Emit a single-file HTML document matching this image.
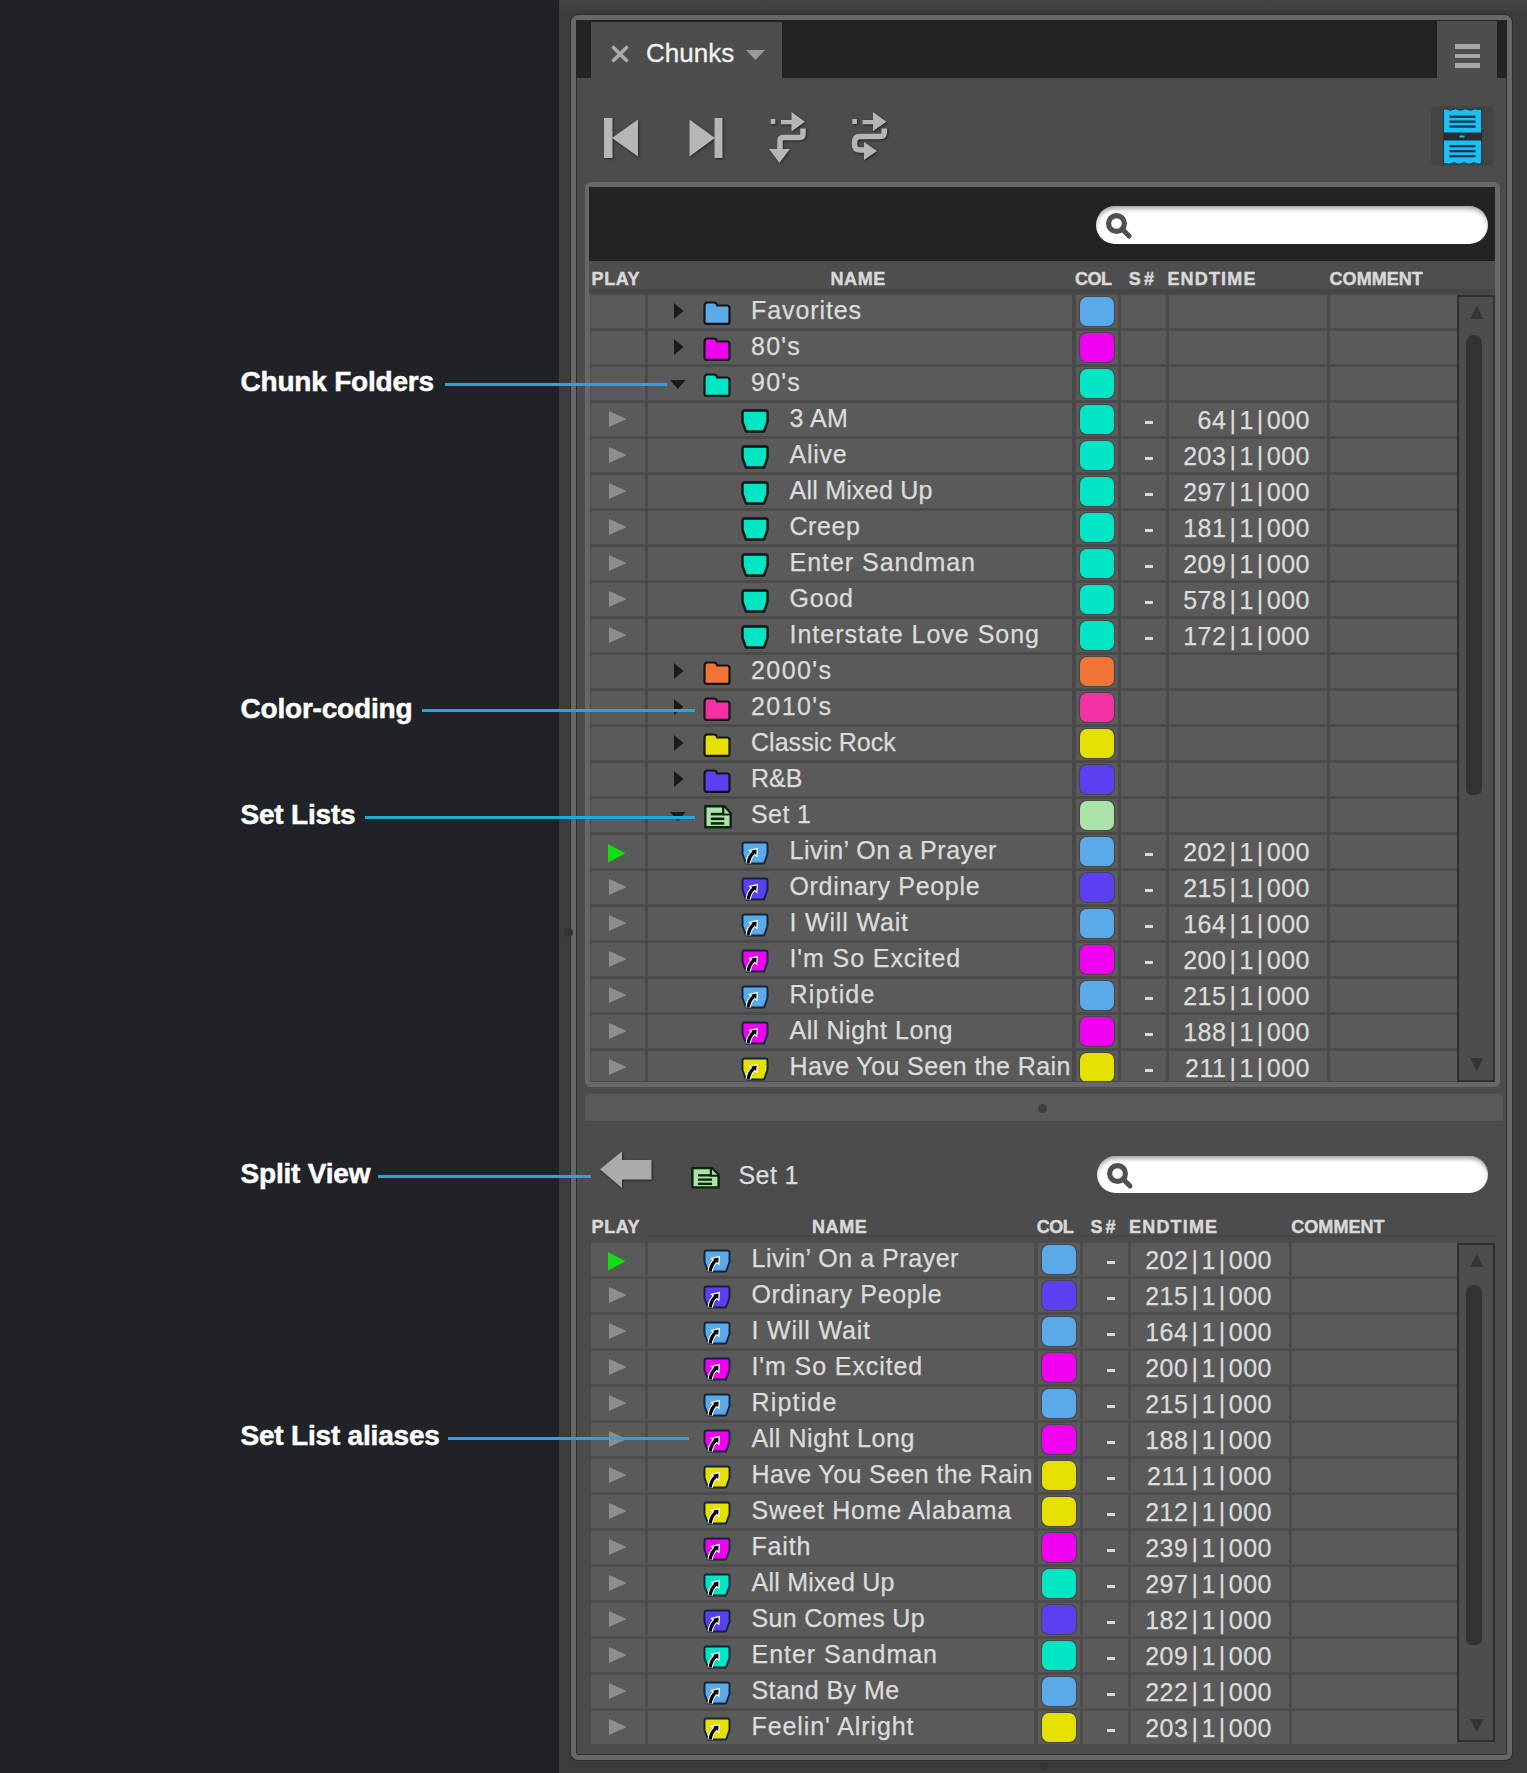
<!DOCTYPE html><html><head><meta charset="utf-8"><style>html,body{margin:0;padding:0;}body{width:1527px;height:1773px;position:relative;overflow:hidden;background:#3c3c3c;font-family:"Liberation Sans", sans-serif;}</style></head><body>
<div style="position:absolute;left:0px;top:0px;width:559px;height:1773px;background:#1f2328;"></div>
<div style="position:absolute;left:559px;top:0px;width:968px;height:14px;background:linear-gradient(#424242 0%, #404040 65%, #383838 100%);"></div>
<div style="position:absolute;left:571px;top:14.5px;width:940.5px;height:1745.5px;box-sizing:border-box;border:5px solid #676767;border-radius:7px;background:#4c4c4c;box-shadow:0 0 0 1px #2e2e2e, inset 0 0 0 1px #2e2e2e"></div>
<div style="position:absolute;left:576px;top:20px;width:931px;height:58px;background:#232323;"></div>
<div style="position:absolute;left:591px;top:22px;width:191px;height:57px;background:#4d4d4d;"></div>
<svg style="position:absolute;left:611px;top:45px;overflow:visible;" width="18" height="18" viewBox="0 0 18 18" preserveAspectRatio="none"><path d="M2.5 2.5 L15.5 15.5 M15.5 2.5 L2.5 15.5" stroke="#aaaaaa" stroke-width="3.6" stroke-linecap="round"/></svg>
<div style="position:absolute;left:646px;top:40px;font-size:26px;line-height:26px;color:#f2f2f2;font-weight:normal;letter-spacing:0px;white-space:nowrap;-webkit-text-stroke:0.3px #f2f2f2">Chunks</div>
<svg style="position:absolute;left:746px;top:49.5px;overflow:visible;" width="19" height="10" viewBox="0 0 19 10" preserveAspectRatio="none"><path d="M0 0 L19 0 L9.5 10 Z" fill="#999999"/></svg>
<div style="position:absolute;left:1437px;top:21px;width:60px;height:58px;background:#4d4d4d;"></div>
<div style="position:absolute;left:1455px;top:44px;width:25px;height:4.6px;background:#a8a8a8;"></div>
<div style="position:absolute;left:1455px;top:53.5px;width:25px;height:4.6px;background:#a8a8a8;"></div>
<div style="position:absolute;left:1455px;top:63.3px;width:25px;height:4.6px;background:#a8a8a8;"></div>
<svg style="position:absolute;left:603px;top:117px;overflow:visible;filter:drop-shadow(1px 1px 1px rgba(0,0,0,0.55))" width="36" height="42" viewBox="0 0 36 42" preserveAspectRatio="none"><rect x="1" y="1" width="8.5" height="40" fill="#b6b6b6"/><path d="M9 21 L35 2.5 L35 39.5 Z" fill="#b6b6b6"/></svg>
<svg style="position:absolute;left:689px;top:117px;overflow:visible;filter:drop-shadow(1px 1px 1px rgba(0,0,0,0.55))" width="34" height="42" viewBox="0 0 34 42" preserveAspectRatio="none"><rect x="25.5" y="1" width="8" height="40" fill="#b6b6b6"/><path d="M0.5 2.5 L26 21 L0.5 39.5 Z" fill="#b6b6b6"/></svg>
<svg style="position:absolute;left:768px;top:110px;overflow:visible;filter:drop-shadow(1px 1px 1px rgba(0,0,0,0.55))" width="42" height="56" viewBox="0 0 42 56" preserveAspectRatio="none"><rect x="2.7" y="9" width="4.6" height="5" fill="#b6b6b6"/><rect x="13" y="10" width="12" height="4.3" fill="#b6b6b6"/><path d="M23.5 2 L37 11.8 L23.5 21.5 Z" fill="#b6b6b6"/><path d="M35 18.5 L35 24 Q35 27.5 31.5 27.5 L15.5 27.5 Q12 27.5 12 31 L12 40" fill="none" stroke="#b6b6b6" stroke-width="5.5"/><path d="M1 39 L22 39 L11.5 53 Z" fill="#b6b6b6"/></svg>
<svg style="position:absolute;left:850px;top:110px;overflow:visible;filter:drop-shadow(1px 1px 1px rgba(0,0,0,0.55))" width="42" height="56" viewBox="0 0 42 56" preserveAspectRatio="none"><rect x="2.3" y="9" width="4.6" height="5" fill="#b6b6b6"/><rect x="12.5" y="10" width="12" height="4.3" fill="#b6b6b6"/><path d="M23 2 L36.5 11.8 L23 21" Z" fill="#b6b6b6"/><path d="M34.3 18.5 L34.3 22.5 Q34.3 26.5 30 26.5 L10 26.5 Q4.5 26.5 4.5 33 L4.5 34 Q4.5 40 10 40 L16 40" fill="none" stroke="#b6b6b6" stroke-width="5.5"/><path d="M14 32 L27 41 L14 50 Z" fill="#b6b6b6"/></svg>
<div style="position:absolute;left:1431px;top:105.5px;width:63px;height:60.5px;border-radius:5px;background:#444444"></div>
<svg style="position:absolute;left:1443px;top:108px;overflow:visible;" width="39" height="57" viewBox="0 0 39 57" preserveAspectRatio="none"><path d="M0.5 1.5 Q3 0 5 1.5 Q7.5 3 10 1.5 Q12.5 0 15 1.5 Q17.5 3 20 1.5 Q22.5 0 25 1.5 Q27.5 3 30 1.5 Q32.5 0 35 1.5 L38.5 1 L38.5 25 L0.5 25 Z" fill="#1cbff0" stroke="#0b3550" stroke-width="1"/><rect x="6.5" y="7.6" width="26" height="2.3" fill="#0b3550"/><rect x="6.5" y="12.5" width="26" height="2.3" fill="#0b3550"/><rect x="6.5" y="17.4" width="26" height="2.3" fill="#0b3550"/><rect x="0" y="25" width="39" height="7" fill="#2c2c2c"/><rect x="16.5" y="27.5" width="5" height="2" fill="#1cbff0"/><path d="M0.5 32 L38.5 32 L38.5 55.5 Q36 57 33.5 55.5 Q31 54 28.5 55.5 Q26 57 23.5 55.5 Q21 54 18.5 55.5 Q16 57 13.5 55.5 Q11 54 8.5 55.5 Q6 57 3.5 55.5 L0.5 56 Z" fill="#1cbff0" stroke="#0b3550" stroke-width="1"/><rect x="6.5" y="37" width="26" height="2.3" fill="#0b3550"/><rect x="6.5" y="42" width="26" height="2.3" fill="#0b3550"/><rect x="6.5" y="47" width="26" height="2.3" fill="#0b3550"/></svg>
<div style="position:absolute;left:585px;top:182px;width:915px;height:905px;box-sizing:border-box;border:5px solid #676767;border-radius:6px;background:#4a4a4a"></div>
<div style="position:absolute;left:589px;top:187px;width:906px;height:74px;background:#232323;"></div>
<div style="position:absolute;left:1096px;top:206px;width:392px;height:38px;border-radius:19.0px;background:#fff;box-shadow:inset 0 4px 4px -1px rgba(0,0,0,0.35)"></div>
<svg style="position:absolute;left:1106px;top:213px;overflow:visible;" width="26" height="26" viewBox="0 0 26 26" preserveAspectRatio="none"><circle cx="10.5" cy="10.5" r="7.9" fill="none" stroke="#505050" stroke-width="5.2"/><path d="M16 16 L23 23" stroke="#505050" stroke-width="5" stroke-linecap="round"/></svg>
<div style="position:absolute;left:589px;top:261px;width:906px;height:33px;background:#4e4e4e;"></div>
<div style="position:absolute;left:589px;top:289px;width:906px;height:5px;background:#474747;"></div>
<div style="position:absolute;left:591.6px;top:269.5px;font-size:18px;line-height:18px;color:#d9d9d9;font-weight:bold;letter-spacing:0px;white-space:nowrap;letter-spacing:0.53px;-webkit-text-stroke:0.45px #d9d9d9">PLAY</div>
<div style="position:absolute;left:830.5px;top:269.5px;font-size:18px;line-height:18px;color:#d9d9d9;font-weight:bold;letter-spacing:0px;white-space:nowrap;letter-spacing:0.57px;-webkit-text-stroke:0.45px #d9d9d9">NAME</div>
<div style="position:absolute;left:1075px;top:269.5px;font-size:18px;line-height:18px;color:#d9d9d9;font-weight:bold;letter-spacing:0px;white-space:nowrap;letter-spacing:-0.5px;-webkit-text-stroke:0.45px #d9d9d9">COL</div>
<div style="position:absolute;left:1128.8px;top:269.5px;font-size:18px;line-height:18px;color:#d9d9d9;font-weight:bold;letter-spacing:0px;white-space:nowrap;letter-spacing:3.1px;-webkit-text-stroke:0.45px #d9d9d9">S#</div>
<div style="position:absolute;left:1167.4px;top:269.5px;font-size:18px;line-height:18px;color:#d9d9d9;font-weight:bold;letter-spacing:0px;white-space:nowrap;letter-spacing:1.17px;-webkit-text-stroke:0.45px #d9d9d9">ENDTIME</div>
<div style="position:absolute;left:1329.6px;top:269.5px;font-size:18px;line-height:18px;color:#d9d9d9;font-weight:bold;letter-spacing:0px;white-space:nowrap;letter-spacing:0.03px;-webkit-text-stroke:0.45px #d9d9d9">COMMENT</div>
<div style="position:absolute;left:0;top:0;width:1527px;height:1081px;overflow:hidden">
<div style="position:absolute;left:591px;top:294.5px;width:53.5px;height:33px;background:#5a5a5a;"></div>
<div style="position:absolute;left:647.5px;top:294.5px;width:424.5px;height:33px;background:#5a5a5a;"></div>
<div style="position:absolute;left:1075.5px;top:294.5px;width:42.5px;height:33px;background:#5a5a5a;"></div>
<div style="position:absolute;left:1120.5px;top:294.5px;width:45.5px;height:33px;background:#5a5a5a;"></div>
<div style="position:absolute;left:1168.5px;top:294.5px;width:158.0px;height:33px;background:#5a5a5a;"></div>
<div style="position:absolute;left:1329.5px;top:294.5px;width:127.0px;height:33px;background:#5a5a5a;"></div>
<svg style="position:absolute;left:673.7px;top:303.0px;overflow:visible;" width="9.5" height="16" viewBox="0 0 9.5 16" preserveAspectRatio="none"><path d="M0 0 L9.5 8.0 L0 16 Z" fill="#1a1a1a"/></svg>
<svg style="position:absolute;left:703px;top:300.5px;overflow:visible;" width="28" height="24" viewBox="0 0 28 24" preserveAspectRatio="none"><path d="M1.5 5 Q1.5 1.5 4.5 1.5 L11 1.5 Q13.5 1.5 14.2 4.5 L24 4.5 Q26.5 4.5 26.5 7 L26.5 20.5 Q26.5 22.8 24.5 22.8 L3.5 22.8 Q1.5 22.8 1.5 20.5 Z" fill="#5aaae9" stroke="#141414" stroke-width="2.2" stroke-linejoin="round"/></svg>
<div style="position:absolute;left:751px;top:297.5px;font-size:25px;line-height:25px;color:#dcdcdc;font-weight:normal;letter-spacing:0.91px;white-space:nowrap;-webkit-text-stroke:0.25px #dcdcdc">Favorites</div>
<div style="position:absolute;left:1079.5px;top:296.5px;width:34px;height:29.5px;border-radius:7px;background:#5aaae9;box-shadow:0 0 0 1px rgba(40,40,50,0.4)"></div>
<div style="position:absolute;left:591px;top:330.5px;width:53.5px;height:33px;background:#5a5a5a;"></div>
<div style="position:absolute;left:647.5px;top:330.5px;width:424.5px;height:33px;background:#5a5a5a;"></div>
<div style="position:absolute;left:1075.5px;top:330.5px;width:42.5px;height:33px;background:#5a5a5a;"></div>
<div style="position:absolute;left:1120.5px;top:330.5px;width:45.5px;height:33px;background:#5a5a5a;"></div>
<div style="position:absolute;left:1168.5px;top:330.5px;width:158.0px;height:33px;background:#5a5a5a;"></div>
<div style="position:absolute;left:1329.5px;top:330.5px;width:127.0px;height:33px;background:#5a5a5a;"></div>
<svg style="position:absolute;left:673.7px;top:339.0px;overflow:visible;" width="9.5" height="16" viewBox="0 0 9.5 16" preserveAspectRatio="none"><path d="M0 0 L9.5 8.0 L0 16 Z" fill="#1a1a1a"/></svg>
<svg style="position:absolute;left:703px;top:336.5px;overflow:visible;" width="28" height="24" viewBox="0 0 28 24" preserveAspectRatio="none"><path d="M1.5 5 Q1.5 1.5 4.5 1.5 L11 1.5 Q13.5 1.5 14.2 4.5 L24 4.5 Q26.5 4.5 26.5 7 L26.5 20.5 Q26.5 22.8 24.5 22.8 L3.5 22.8 Q1.5 22.8 1.5 20.5 Z" fill="#f000f0" stroke="#141414" stroke-width="2.2" stroke-linejoin="round"/></svg>
<div style="position:absolute;left:751px;top:333.5px;font-size:25px;line-height:25px;color:#dcdcdc;font-weight:normal;letter-spacing:1.23px;white-space:nowrap;-webkit-text-stroke:0.25px #dcdcdc">80's</div>
<div style="position:absolute;left:1079.5px;top:332.5px;width:34px;height:29.5px;border-radius:7px;background:#f000f0;box-shadow:0 0 0 1px rgba(40,40,50,0.4)"></div>
<div style="position:absolute;left:591px;top:366.5px;width:53.5px;height:33px;background:#5a5a5a;"></div>
<div style="position:absolute;left:647.5px;top:366.5px;width:424.5px;height:33px;background:#5a5a5a;"></div>
<div style="position:absolute;left:1075.5px;top:366.5px;width:42.5px;height:33px;background:#5a5a5a;"></div>
<div style="position:absolute;left:1120.5px;top:366.5px;width:45.5px;height:33px;background:#5a5a5a;"></div>
<div style="position:absolute;left:1168.5px;top:366.5px;width:158.0px;height:33px;background:#5a5a5a;"></div>
<div style="position:absolute;left:1329.5px;top:366.5px;width:127.0px;height:33px;background:#5a5a5a;"></div>
<svg style="position:absolute;left:670.3px;top:380.0px;overflow:visible;" width="15.5" height="9" viewBox="0 0 15.5 9" preserveAspectRatio="none"><path d="M0 0 L15.5 0 L7.75 9 Z" fill="#1a1a1a"/></svg>
<svg style="position:absolute;left:703px;top:372.5px;overflow:visible;" width="28" height="24" viewBox="0 0 28 24" preserveAspectRatio="none"><path d="M1.5 5 Q1.5 1.5 4.5 1.5 L11 1.5 Q13.5 1.5 14.2 4.5 L24 4.5 Q26.5 4.5 26.5 7 L26.5 20.5 Q26.5 22.8 24.5 22.8 L3.5 22.8 Q1.5 22.8 1.5 20.5 Z" fill="#00e6c4" stroke="#141414" stroke-width="2.2" stroke-linejoin="round"/></svg>
<div style="position:absolute;left:751px;top:369.5px;font-size:25px;line-height:25px;color:#dcdcdc;font-weight:normal;letter-spacing:1.23px;white-space:nowrap;-webkit-text-stroke:0.25px #dcdcdc">90's</div>
<div style="position:absolute;left:1079.5px;top:368.5px;width:34px;height:29.5px;border-radius:7px;background:#00e6c4;box-shadow:0 0 0 1px rgba(40,40,50,0.4)"></div>
<div style="position:absolute;left:591px;top:402.5px;width:53.5px;height:33px;background:#5a5a5a;"></div>
<div style="position:absolute;left:647.5px;top:402.5px;width:424.5px;height:33px;background:#5a5a5a;"></div>
<div style="position:absolute;left:1075.5px;top:402.5px;width:42.5px;height:33px;background:#5a5a5a;"></div>
<div style="position:absolute;left:1120.5px;top:402.5px;width:45.5px;height:33px;background:#5a5a5a;"></div>
<div style="position:absolute;left:1168.5px;top:402.5px;width:158.0px;height:33px;background:#5a5a5a;"></div>
<div style="position:absolute;left:1329.5px;top:402.5px;width:127.0px;height:33px;background:#5a5a5a;"></div>
<svg style="position:absolute;left:608.8px;top:411.0px;overflow:visible;" width="17.5" height="16" viewBox="0 0 17.5 16" preserveAspectRatio="none"><path d="M0 0 L17.5 8.0 L0 16 Z" fill="#8e8e8e"/></svg>
<svg style="position:absolute;left:741px;top:408.5px;overflow:visible;" width="28" height="24" viewBox="0 0 28 24" preserveAspectRatio="none"><path d="M1.5 3.5 Q1.5 1.5 3.5 1.5 L24.5 1.5 Q26.5 1.5 26.5 3.5 L26.5 13 L23 22.5 L5 22.5 L1.5 13 Z" fill="#00e6c4" stroke="#141414" stroke-width="2.4" stroke-linejoin="round"/></svg>
<div style="position:absolute;left:789.5px;top:405.5px;font-size:25px;line-height:25px;color:#dcdcdc;font-weight:normal;letter-spacing:0.47px;white-space:nowrap;-webkit-text-stroke:0.25px #dcdcdc">3 AM</div>
<div style="position:absolute;left:1079.5px;top:404.5px;width:34px;height:29.5px;border-radius:7px;background:#00e6c4;box-shadow:0 0 0 1px rgba(40,40,50,0.4)"></div>
<div style="position:absolute;left:1144.5px;top:421.0px;width:8px;height:3px;background:#d8d8d8;"></div>
<div style="position:absolute;right:217px;top:407.5px;font-size:25px;line-height:25px;color:#dcdcdc;letter-spacing:0.5px;white-space:nowrap;-webkit-text-stroke:0.25px #dcdcdc">64<span style="margin:0 3px">|</span>1<span style="margin:0 3px">|</span>000</div>
<div style="position:absolute;left:591px;top:438.5px;width:53.5px;height:33px;background:#5a5a5a;"></div>
<div style="position:absolute;left:647.5px;top:438.5px;width:424.5px;height:33px;background:#5a5a5a;"></div>
<div style="position:absolute;left:1075.5px;top:438.5px;width:42.5px;height:33px;background:#5a5a5a;"></div>
<div style="position:absolute;left:1120.5px;top:438.5px;width:45.5px;height:33px;background:#5a5a5a;"></div>
<div style="position:absolute;left:1168.5px;top:438.5px;width:158.0px;height:33px;background:#5a5a5a;"></div>
<div style="position:absolute;left:1329.5px;top:438.5px;width:127.0px;height:33px;background:#5a5a5a;"></div>
<svg style="position:absolute;left:608.8px;top:447.0px;overflow:visible;" width="17.5" height="16" viewBox="0 0 17.5 16" preserveAspectRatio="none"><path d="M0 0 L17.5 8.0 L0 16 Z" fill="#8e8e8e"/></svg>
<svg style="position:absolute;left:741px;top:444.5px;overflow:visible;" width="28" height="24" viewBox="0 0 28 24" preserveAspectRatio="none"><path d="M1.5 3.5 Q1.5 1.5 3.5 1.5 L24.5 1.5 Q26.5 1.5 26.5 3.5 L26.5 13 L23 22.5 L5 22.5 L1.5 13 Z" fill="#00e6c4" stroke="#141414" stroke-width="2.4" stroke-linejoin="round"/></svg>
<div style="position:absolute;left:789.5px;top:441.5px;font-size:25px;line-height:25px;color:#dcdcdc;font-weight:normal;letter-spacing:0.75px;white-space:nowrap;-webkit-text-stroke:0.25px #dcdcdc">Alive</div>
<div style="position:absolute;left:1079.5px;top:440.5px;width:34px;height:29.5px;border-radius:7px;background:#00e6c4;box-shadow:0 0 0 1px rgba(40,40,50,0.4)"></div>
<div style="position:absolute;left:1144.5px;top:457.0px;width:8px;height:3px;background:#d8d8d8;"></div>
<div style="position:absolute;right:217px;top:443.5px;font-size:25px;line-height:25px;color:#dcdcdc;letter-spacing:0.5px;white-space:nowrap;-webkit-text-stroke:0.25px #dcdcdc">203<span style="margin:0 3px">|</span>1<span style="margin:0 3px">|</span>000</div>
<div style="position:absolute;left:591px;top:474.5px;width:53.5px;height:33px;background:#5a5a5a;"></div>
<div style="position:absolute;left:647.5px;top:474.5px;width:424.5px;height:33px;background:#5a5a5a;"></div>
<div style="position:absolute;left:1075.5px;top:474.5px;width:42.5px;height:33px;background:#5a5a5a;"></div>
<div style="position:absolute;left:1120.5px;top:474.5px;width:45.5px;height:33px;background:#5a5a5a;"></div>
<div style="position:absolute;left:1168.5px;top:474.5px;width:158.0px;height:33px;background:#5a5a5a;"></div>
<div style="position:absolute;left:1329.5px;top:474.5px;width:127.0px;height:33px;background:#5a5a5a;"></div>
<svg style="position:absolute;left:608.8px;top:483.0px;overflow:visible;" width="17.5" height="16" viewBox="0 0 17.5 16" preserveAspectRatio="none"><path d="M0 0 L17.5 8.0 L0 16 Z" fill="#8e8e8e"/></svg>
<svg style="position:absolute;left:741px;top:480.5px;overflow:visible;" width="28" height="24" viewBox="0 0 28 24" preserveAspectRatio="none"><path d="M1.5 3.5 Q1.5 1.5 3.5 1.5 L24.5 1.5 Q26.5 1.5 26.5 3.5 L26.5 13 L23 22.5 L5 22.5 L1.5 13 Z" fill="#00e6c4" stroke="#141414" stroke-width="2.4" stroke-linejoin="round"/></svg>
<div style="position:absolute;left:789.5px;top:477.5px;font-size:25px;line-height:25px;color:#dcdcdc;font-weight:normal;letter-spacing:0.24px;white-space:nowrap;-webkit-text-stroke:0.25px #dcdcdc">All Mixed Up</div>
<div style="position:absolute;left:1079.5px;top:476.5px;width:34px;height:29.5px;border-radius:7px;background:#00e6c4;box-shadow:0 0 0 1px rgba(40,40,50,0.4)"></div>
<div style="position:absolute;left:1144.5px;top:493.0px;width:8px;height:3px;background:#d8d8d8;"></div>
<div style="position:absolute;right:217px;top:479.5px;font-size:25px;line-height:25px;color:#dcdcdc;letter-spacing:0.5px;white-space:nowrap;-webkit-text-stroke:0.25px #dcdcdc">297<span style="margin:0 3px">|</span>1<span style="margin:0 3px">|</span>000</div>
<div style="position:absolute;left:591px;top:510.5px;width:53.5px;height:33px;background:#5a5a5a;"></div>
<div style="position:absolute;left:647.5px;top:510.5px;width:424.5px;height:33px;background:#5a5a5a;"></div>
<div style="position:absolute;left:1075.5px;top:510.5px;width:42.5px;height:33px;background:#5a5a5a;"></div>
<div style="position:absolute;left:1120.5px;top:510.5px;width:45.5px;height:33px;background:#5a5a5a;"></div>
<div style="position:absolute;left:1168.5px;top:510.5px;width:158.0px;height:33px;background:#5a5a5a;"></div>
<div style="position:absolute;left:1329.5px;top:510.5px;width:127.0px;height:33px;background:#5a5a5a;"></div>
<svg style="position:absolute;left:608.8px;top:519.0px;overflow:visible;" width="17.5" height="16" viewBox="0 0 17.5 16" preserveAspectRatio="none"><path d="M0 0 L17.5 8.0 L0 16 Z" fill="#8e8e8e"/></svg>
<svg style="position:absolute;left:741px;top:516.5px;overflow:visible;" width="28" height="24" viewBox="0 0 28 24" preserveAspectRatio="none"><path d="M1.5 3.5 Q1.5 1.5 3.5 1.5 L24.5 1.5 Q26.5 1.5 26.5 3.5 L26.5 13 L23 22.5 L5 22.5 L1.5 13 Z" fill="#00e6c4" stroke="#141414" stroke-width="2.4" stroke-linejoin="round"/></svg>
<div style="position:absolute;left:789.5px;top:513.5px;font-size:25px;line-height:25px;color:#dcdcdc;font-weight:normal;letter-spacing:0.57px;white-space:nowrap;-webkit-text-stroke:0.25px #dcdcdc">Creep</div>
<div style="position:absolute;left:1079.5px;top:512.5px;width:34px;height:29.5px;border-radius:7px;background:#00e6c4;box-shadow:0 0 0 1px rgba(40,40,50,0.4)"></div>
<div style="position:absolute;left:1144.5px;top:529.0px;width:8px;height:3px;background:#d8d8d8;"></div>
<div style="position:absolute;right:217px;top:515.5px;font-size:25px;line-height:25px;color:#dcdcdc;letter-spacing:0.5px;white-space:nowrap;-webkit-text-stroke:0.25px #dcdcdc">181<span style="margin:0 3px">|</span>1<span style="margin:0 3px">|</span>000</div>
<div style="position:absolute;left:591px;top:546.5px;width:53.5px;height:33px;background:#5a5a5a;"></div>
<div style="position:absolute;left:647.5px;top:546.5px;width:424.5px;height:33px;background:#5a5a5a;"></div>
<div style="position:absolute;left:1075.5px;top:546.5px;width:42.5px;height:33px;background:#5a5a5a;"></div>
<div style="position:absolute;left:1120.5px;top:546.5px;width:45.5px;height:33px;background:#5a5a5a;"></div>
<div style="position:absolute;left:1168.5px;top:546.5px;width:158.0px;height:33px;background:#5a5a5a;"></div>
<div style="position:absolute;left:1329.5px;top:546.5px;width:127.0px;height:33px;background:#5a5a5a;"></div>
<svg style="position:absolute;left:608.8px;top:555.0px;overflow:visible;" width="17.5" height="16" viewBox="0 0 17.5 16" preserveAspectRatio="none"><path d="M0 0 L17.5 8.0 L0 16 Z" fill="#8e8e8e"/></svg>
<svg style="position:absolute;left:741px;top:552.5px;overflow:visible;" width="28" height="24" viewBox="0 0 28 24" preserveAspectRatio="none"><path d="M1.5 3.5 Q1.5 1.5 3.5 1.5 L24.5 1.5 Q26.5 1.5 26.5 3.5 L26.5 13 L23 22.5 L5 22.5 L1.5 13 Z" fill="#00e6c4" stroke="#141414" stroke-width="2.4" stroke-linejoin="round"/></svg>
<div style="position:absolute;left:789.5px;top:549.5px;font-size:25px;line-height:25px;color:#dcdcdc;font-weight:normal;letter-spacing:0.98px;white-space:nowrap;-webkit-text-stroke:0.25px #dcdcdc">Enter Sandman</div>
<div style="position:absolute;left:1079.5px;top:548.5px;width:34px;height:29.5px;border-radius:7px;background:#00e6c4;box-shadow:0 0 0 1px rgba(40,40,50,0.4)"></div>
<div style="position:absolute;left:1144.5px;top:565.0px;width:8px;height:3px;background:#d8d8d8;"></div>
<div style="position:absolute;right:217px;top:551.5px;font-size:25px;line-height:25px;color:#dcdcdc;letter-spacing:0.5px;white-space:nowrap;-webkit-text-stroke:0.25px #dcdcdc">209<span style="margin:0 3px">|</span>1<span style="margin:0 3px">|</span>000</div>
<div style="position:absolute;left:591px;top:582.5px;width:53.5px;height:33px;background:#5a5a5a;"></div>
<div style="position:absolute;left:647.5px;top:582.5px;width:424.5px;height:33px;background:#5a5a5a;"></div>
<div style="position:absolute;left:1075.5px;top:582.5px;width:42.5px;height:33px;background:#5a5a5a;"></div>
<div style="position:absolute;left:1120.5px;top:582.5px;width:45.5px;height:33px;background:#5a5a5a;"></div>
<div style="position:absolute;left:1168.5px;top:582.5px;width:158.0px;height:33px;background:#5a5a5a;"></div>
<div style="position:absolute;left:1329.5px;top:582.5px;width:127.0px;height:33px;background:#5a5a5a;"></div>
<svg style="position:absolute;left:608.8px;top:591.0px;overflow:visible;" width="17.5" height="16" viewBox="0 0 17.5 16" preserveAspectRatio="none"><path d="M0 0 L17.5 8.0 L0 16 Z" fill="#8e8e8e"/></svg>
<svg style="position:absolute;left:741px;top:588.5px;overflow:visible;" width="28" height="24" viewBox="0 0 28 24" preserveAspectRatio="none"><path d="M1.5 3.5 Q1.5 1.5 3.5 1.5 L24.5 1.5 Q26.5 1.5 26.5 3.5 L26.5 13 L23 22.5 L5 22.5 L1.5 13 Z" fill="#00e6c4" stroke="#141414" stroke-width="2.4" stroke-linejoin="round"/></svg>
<div style="position:absolute;left:789.5px;top:585.5px;font-size:25px;line-height:25px;color:#dcdcdc;font-weight:normal;letter-spacing:0.77px;white-space:nowrap;-webkit-text-stroke:0.25px #dcdcdc">Good</div>
<div style="position:absolute;left:1079.5px;top:584.5px;width:34px;height:29.5px;border-radius:7px;background:#00e6c4;box-shadow:0 0 0 1px rgba(40,40,50,0.4)"></div>
<div style="position:absolute;left:1144.5px;top:601.0px;width:8px;height:3px;background:#d8d8d8;"></div>
<div style="position:absolute;right:217px;top:587.5px;font-size:25px;line-height:25px;color:#dcdcdc;letter-spacing:0.5px;white-space:nowrap;-webkit-text-stroke:0.25px #dcdcdc">578<span style="margin:0 3px">|</span>1<span style="margin:0 3px">|</span>000</div>
<div style="position:absolute;left:591px;top:618.5px;width:53.5px;height:33px;background:#5a5a5a;"></div>
<div style="position:absolute;left:647.5px;top:618.5px;width:424.5px;height:33px;background:#5a5a5a;"></div>
<div style="position:absolute;left:1075.5px;top:618.5px;width:42.5px;height:33px;background:#5a5a5a;"></div>
<div style="position:absolute;left:1120.5px;top:618.5px;width:45.5px;height:33px;background:#5a5a5a;"></div>
<div style="position:absolute;left:1168.5px;top:618.5px;width:158.0px;height:33px;background:#5a5a5a;"></div>
<div style="position:absolute;left:1329.5px;top:618.5px;width:127.0px;height:33px;background:#5a5a5a;"></div>
<svg style="position:absolute;left:608.8px;top:627.0px;overflow:visible;" width="17.5" height="16" viewBox="0 0 17.5 16" preserveAspectRatio="none"><path d="M0 0 L17.5 8.0 L0 16 Z" fill="#8e8e8e"/></svg>
<svg style="position:absolute;left:741px;top:624.5px;overflow:visible;" width="28" height="24" viewBox="0 0 28 24" preserveAspectRatio="none"><path d="M1.5 3.5 Q1.5 1.5 3.5 1.5 L24.5 1.5 Q26.5 1.5 26.5 3.5 L26.5 13 L23 22.5 L5 22.5 L1.5 13 Z" fill="#00e6c4" stroke="#141414" stroke-width="2.4" stroke-linejoin="round"/></svg>
<div style="position:absolute;left:789.5px;top:621.5px;font-size:25px;line-height:25px;color:#dcdcdc;font-weight:normal;letter-spacing:0.99px;white-space:nowrap;-webkit-text-stroke:0.25px #dcdcdc">Interstate Love Song</div>
<div style="position:absolute;left:1079.5px;top:620.5px;width:34px;height:29.5px;border-radius:7px;background:#00e6c4;box-shadow:0 0 0 1px rgba(40,40,50,0.4)"></div>
<div style="position:absolute;left:1144.5px;top:637.0px;width:8px;height:3px;background:#d8d8d8;"></div>
<div style="position:absolute;right:217px;top:623.5px;font-size:25px;line-height:25px;color:#dcdcdc;letter-spacing:0.5px;white-space:nowrap;-webkit-text-stroke:0.25px #dcdcdc">172<span style="margin:0 3px">|</span>1<span style="margin:0 3px">|</span>000</div>
<div style="position:absolute;left:591px;top:654.5px;width:53.5px;height:33px;background:#5a5a5a;"></div>
<div style="position:absolute;left:647.5px;top:654.5px;width:424.5px;height:33px;background:#5a5a5a;"></div>
<div style="position:absolute;left:1075.5px;top:654.5px;width:42.5px;height:33px;background:#5a5a5a;"></div>
<div style="position:absolute;left:1120.5px;top:654.5px;width:45.5px;height:33px;background:#5a5a5a;"></div>
<div style="position:absolute;left:1168.5px;top:654.5px;width:158.0px;height:33px;background:#5a5a5a;"></div>
<div style="position:absolute;left:1329.5px;top:654.5px;width:127.0px;height:33px;background:#5a5a5a;"></div>
<svg style="position:absolute;left:673.7px;top:663.0px;overflow:visible;" width="9.5" height="16" viewBox="0 0 9.5 16" preserveAspectRatio="none"><path d="M0 0 L9.5 8.0 L0 16 Z" fill="#1a1a1a"/></svg>
<svg style="position:absolute;left:703px;top:660.5px;overflow:visible;" width="28" height="24" viewBox="0 0 28 24" preserveAspectRatio="none"><path d="M1.5 5 Q1.5 1.5 4.5 1.5 L11 1.5 Q13.5 1.5 14.2 4.5 L24 4.5 Q26.5 4.5 26.5 7 L26.5 20.5 Q26.5 22.8 24.5 22.8 L3.5 22.8 Q1.5 22.8 1.5 20.5 Z" fill="#f07436" stroke="#141414" stroke-width="2.2" stroke-linejoin="round"/></svg>
<div style="position:absolute;left:751px;top:657.5px;font-size:25px;line-height:25px;color:#dcdcdc;font-weight:normal;letter-spacing:1.42px;white-space:nowrap;-webkit-text-stroke:0.25px #dcdcdc">2000's</div>
<div style="position:absolute;left:1079.5px;top:656.5px;width:34px;height:29.5px;border-radius:7px;background:#f07436;box-shadow:0 0 0 1px rgba(40,40,50,0.4)"></div>
<div style="position:absolute;left:591px;top:690.5px;width:53.5px;height:33px;background:#5a5a5a;"></div>
<div style="position:absolute;left:647.5px;top:690.5px;width:424.5px;height:33px;background:#5a5a5a;"></div>
<div style="position:absolute;left:1075.5px;top:690.5px;width:42.5px;height:33px;background:#5a5a5a;"></div>
<div style="position:absolute;left:1120.5px;top:690.5px;width:45.5px;height:33px;background:#5a5a5a;"></div>
<div style="position:absolute;left:1168.5px;top:690.5px;width:158.0px;height:33px;background:#5a5a5a;"></div>
<div style="position:absolute;left:1329.5px;top:690.5px;width:127.0px;height:33px;background:#5a5a5a;"></div>
<svg style="position:absolute;left:673.7px;top:699.0px;overflow:visible;" width="9.5" height="16" viewBox="0 0 9.5 16" preserveAspectRatio="none"><path d="M0 0 L9.5 8.0 L0 16 Z" fill="#1a1a1a"/></svg>
<svg style="position:absolute;left:703px;top:696.5px;overflow:visible;" width="28" height="24" viewBox="0 0 28 24" preserveAspectRatio="none"><path d="M1.5 5 Q1.5 1.5 4.5 1.5 L11 1.5 Q13.5 1.5 14.2 4.5 L24 4.5 Q26.5 4.5 26.5 7 L26.5 20.5 Q26.5 22.8 24.5 22.8 L3.5 22.8 Q1.5 22.8 1.5 20.5 Z" fill="#f232a4" stroke="#141414" stroke-width="2.2" stroke-linejoin="round"/></svg>
<div style="position:absolute;left:751px;top:693.5px;font-size:25px;line-height:25px;color:#dcdcdc;font-weight:normal;letter-spacing:1.42px;white-space:nowrap;-webkit-text-stroke:0.25px #dcdcdc">2010's</div>
<div style="position:absolute;left:1079.5px;top:692.5px;width:34px;height:29.5px;border-radius:7px;background:#f232a4;box-shadow:0 0 0 1px rgba(40,40,50,0.4)"></div>
<div style="position:absolute;left:591px;top:726.5px;width:53.5px;height:33px;background:#5a5a5a;"></div>
<div style="position:absolute;left:647.5px;top:726.5px;width:424.5px;height:33px;background:#5a5a5a;"></div>
<div style="position:absolute;left:1075.5px;top:726.5px;width:42.5px;height:33px;background:#5a5a5a;"></div>
<div style="position:absolute;left:1120.5px;top:726.5px;width:45.5px;height:33px;background:#5a5a5a;"></div>
<div style="position:absolute;left:1168.5px;top:726.5px;width:158.0px;height:33px;background:#5a5a5a;"></div>
<div style="position:absolute;left:1329.5px;top:726.5px;width:127.0px;height:33px;background:#5a5a5a;"></div>
<svg style="position:absolute;left:673.7px;top:735.0px;overflow:visible;" width="9.5" height="16" viewBox="0 0 9.5 16" preserveAspectRatio="none"><path d="M0 0 L9.5 8.0 L0 16 Z" fill="#1a1a1a"/></svg>
<svg style="position:absolute;left:703px;top:732.5px;overflow:visible;" width="28" height="24" viewBox="0 0 28 24" preserveAspectRatio="none"><path d="M1.5 5 Q1.5 1.5 4.5 1.5 L11 1.5 Q13.5 1.5 14.2 4.5 L24 4.5 Q26.5 4.5 26.5 7 L26.5 20.5 Q26.5 22.8 24.5 22.8 L3.5 22.8 Q1.5 22.8 1.5 20.5 Z" fill="#e6e000" stroke="#141414" stroke-width="2.2" stroke-linejoin="round"/></svg>
<div style="position:absolute;left:751px;top:729.5px;font-size:25px;line-height:25px;color:#dcdcdc;font-weight:normal;letter-spacing:0.03px;white-space:nowrap;-webkit-text-stroke:0.25px #dcdcdc">Classic Rock</div>
<div style="position:absolute;left:1079.5px;top:728.5px;width:34px;height:29.5px;border-radius:7px;background:#e6e000;box-shadow:0 0 0 1px rgba(40,40,50,0.4)"></div>
<div style="position:absolute;left:591px;top:762.5px;width:53.5px;height:33px;background:#5a5a5a;"></div>
<div style="position:absolute;left:647.5px;top:762.5px;width:424.5px;height:33px;background:#5a5a5a;"></div>
<div style="position:absolute;left:1075.5px;top:762.5px;width:42.5px;height:33px;background:#5a5a5a;"></div>
<div style="position:absolute;left:1120.5px;top:762.5px;width:45.5px;height:33px;background:#5a5a5a;"></div>
<div style="position:absolute;left:1168.5px;top:762.5px;width:158.0px;height:33px;background:#5a5a5a;"></div>
<div style="position:absolute;left:1329.5px;top:762.5px;width:127.0px;height:33px;background:#5a5a5a;"></div>
<svg style="position:absolute;left:673.7px;top:771.0px;overflow:visible;" width="9.5" height="16" viewBox="0 0 9.5 16" preserveAspectRatio="none"><path d="M0 0 L9.5 8.0 L0 16 Z" fill="#1a1a1a"/></svg>
<svg style="position:absolute;left:703px;top:768.5px;overflow:visible;" width="28" height="24" viewBox="0 0 28 24" preserveAspectRatio="none"><path d="M1.5 5 Q1.5 1.5 4.5 1.5 L11 1.5 Q13.5 1.5 14.2 4.5 L24 4.5 Q26.5 4.5 26.5 7 L26.5 20.5 Q26.5 22.8 24.5 22.8 L3.5 22.8 Q1.5 22.8 1.5 20.5 Z" fill="#5a40f0" stroke="#141414" stroke-width="2.2" stroke-linejoin="round"/></svg>
<div style="position:absolute;left:751px;top:765.5px;font-size:25px;line-height:25px;color:#dcdcdc;font-weight:normal;letter-spacing:0.0px;white-space:nowrap;-webkit-text-stroke:0.25px #dcdcdc">R&amp;B</div>
<div style="position:absolute;left:1079.5px;top:764.5px;width:34px;height:29.5px;border-radius:7px;background:#5a40f0;box-shadow:0 0 0 1px rgba(40,40,50,0.4)"></div>
<div style="position:absolute;left:591px;top:798.5px;width:53.5px;height:33px;background:#5a5a5a;"></div>
<div style="position:absolute;left:647.5px;top:798.5px;width:424.5px;height:33px;background:#5a5a5a;"></div>
<div style="position:absolute;left:1075.5px;top:798.5px;width:42.5px;height:33px;background:#5a5a5a;"></div>
<div style="position:absolute;left:1120.5px;top:798.5px;width:45.5px;height:33px;background:#5a5a5a;"></div>
<div style="position:absolute;left:1168.5px;top:798.5px;width:158.0px;height:33px;background:#5a5a5a;"></div>
<div style="position:absolute;left:1329.5px;top:798.5px;width:127.0px;height:33px;background:#5a5a5a;"></div>
<svg style="position:absolute;left:670.3px;top:812.0px;overflow:visible;" width="15.5" height="9" viewBox="0 0 15.5 9" preserveAspectRatio="none"><path d="M0 0 L15.5 0 L7.75 9 Z" fill="#1a1a1a"/></svg>
<svg style="position:absolute;left:703.5px;top:805.0px;overflow:visible;" width="28" height="23.5" viewBox="0 0 28 24" preserveAspectRatio="none"><path d="M1.3 1.3 L20.5 1.3 L26.7 8.5 L26.7 22.7 L1.3 22.7 Z" fill="#abe3ab" stroke="#0c240c" stroke-width="2.4" stroke-linejoin="round"/><path d="M19.2 1.5 L19.2 9.7 L26.5 9.7" fill="none" stroke="#0c240c" stroke-width="2.2"/><rect x="6.8" y="8" width="12" height="2.6" fill="#0c240c"/><rect x="6.8" y="12.8" width="13.5" height="2.6" fill="#0c240c"/><rect x="6.8" y="17.5" width="13.5" height="2.6" fill="#0c240c"/></svg>
<div style="position:absolute;left:751px;top:801.5px;font-size:25px;line-height:25px;color:#dcdcdc;font-weight:normal;letter-spacing:0.4px;white-space:nowrap;-webkit-text-stroke:0.25px #dcdcdc">Set 1</div>
<div style="position:absolute;left:1079.5px;top:800.5px;width:34px;height:29.5px;border-radius:7px;background:#abe3ab;box-shadow:0 0 0 1px rgba(40,40,50,0.4)"></div>
<div style="position:absolute;left:591px;top:834.5px;width:53.5px;height:33px;background:#5a5a5a;"></div>
<div style="position:absolute;left:647.5px;top:834.5px;width:424.5px;height:33px;background:#5a5a5a;"></div>
<div style="position:absolute;left:1075.5px;top:834.5px;width:42.5px;height:33px;background:#5a5a5a;"></div>
<div style="position:absolute;left:1120.5px;top:834.5px;width:45.5px;height:33px;background:#5a5a5a;"></div>
<div style="position:absolute;left:1168.5px;top:834.5px;width:158.0px;height:33px;background:#5a5a5a;"></div>
<div style="position:absolute;left:1329.5px;top:834.5px;width:127.0px;height:33px;background:#5a5a5a;"></div>
<svg style="position:absolute;left:608px;top:843.5px;overflow:visible;" width="17.5" height="18.5" viewBox="0 0 17.5 18.5" preserveAspectRatio="none"><path d="M0 0 L17.5 9.25 L0 18.5 Z" fill="#10e010"/></svg>
<svg style="position:absolute;left:741px;top:841.0px;overflow:visible;" width="28" height="24" viewBox="0 0 28 24" preserveAspectRatio="none"><path d="M1.5 3.5 Q1.5 1.5 3.5 1.5 L24.5 1.5 Q26.5 1.5 26.5 3.5 L26.5 13 L23 22.5 L5 22.5 L1.5 13 Z" fill="#5aaae9" stroke="#10243a" stroke-width="1.9" stroke-linejoin="round"/><path d="M7.2 22.4 Q7.8 16 12.6 11.6" stroke="#fff" stroke-width="5.4" fill="none"/><path d="M8.6 9.4 L16.3 7.6 L15.8 15.2 Z" fill="#000" stroke="#fff" stroke-width="1.3" stroke-linejoin="miter"/><path d="M7.2 22.4 Q7.8 16 12.9 11.3" stroke="#000" stroke-width="3.2" fill="none"/></svg>
<div style="position:absolute;left:789.5px;top:837.5px;font-size:25px;line-height:25px;color:#dcdcdc;font-weight:normal;letter-spacing:0.54px;white-space:nowrap;-webkit-text-stroke:0.25px #dcdcdc">Livin&#8217; On a Prayer</div>
<div style="position:absolute;left:1079.5px;top:836.5px;width:34px;height:29.5px;border-radius:7px;background:#5aaae9;box-shadow:0 0 0 1px rgba(40,40,50,0.4)"></div>
<div style="position:absolute;left:1144.5px;top:853.0px;width:8px;height:3px;background:#d8d8d8;"></div>
<div style="position:absolute;right:217px;top:839.5px;font-size:25px;line-height:25px;color:#dcdcdc;letter-spacing:0.5px;white-space:nowrap;-webkit-text-stroke:0.25px #dcdcdc">202<span style="margin:0 3px">|</span>1<span style="margin:0 3px">|</span>000</div>
<div style="position:absolute;left:591px;top:870.5px;width:53.5px;height:33px;background:#5a5a5a;"></div>
<div style="position:absolute;left:647.5px;top:870.5px;width:424.5px;height:33px;background:#5a5a5a;"></div>
<div style="position:absolute;left:1075.5px;top:870.5px;width:42.5px;height:33px;background:#5a5a5a;"></div>
<div style="position:absolute;left:1120.5px;top:870.5px;width:45.5px;height:33px;background:#5a5a5a;"></div>
<div style="position:absolute;left:1168.5px;top:870.5px;width:158.0px;height:33px;background:#5a5a5a;"></div>
<div style="position:absolute;left:1329.5px;top:870.5px;width:127.0px;height:33px;background:#5a5a5a;"></div>
<svg style="position:absolute;left:608.8px;top:879.0px;overflow:visible;" width="17.5" height="16" viewBox="0 0 17.5 16" preserveAspectRatio="none"><path d="M0 0 L17.5 8.0 L0 16 Z" fill="#8e8e8e"/></svg>
<svg style="position:absolute;left:741px;top:877.0px;overflow:visible;" width="28" height="24" viewBox="0 0 28 24" preserveAspectRatio="none"><path d="M1.5 3.5 Q1.5 1.5 3.5 1.5 L24.5 1.5 Q26.5 1.5 26.5 3.5 L26.5 13 L23 22.5 L5 22.5 L1.5 13 Z" fill="#5a40f0" stroke="#10243a" stroke-width="1.9" stroke-linejoin="round"/><path d="M7.2 22.4 Q7.8 16 12.6 11.6" stroke="#fff" stroke-width="5.4" fill="none"/><path d="M8.6 9.4 L16.3 7.6 L15.8 15.2 Z" fill="#000" stroke="#fff" stroke-width="1.3" stroke-linejoin="miter"/><path d="M7.2 22.4 Q7.8 16 12.9 11.3" stroke="#000" stroke-width="3.2" fill="none"/></svg>
<div style="position:absolute;left:789.5px;top:873.5px;font-size:25px;line-height:25px;color:#dcdcdc;font-weight:normal;letter-spacing:0.67px;white-space:nowrap;-webkit-text-stroke:0.25px #dcdcdc">Ordinary People</div>
<div style="position:absolute;left:1079.5px;top:872.5px;width:34px;height:29.5px;border-radius:7px;background:#5a40f0;box-shadow:0 0 0 1px rgba(40,40,50,0.4)"></div>
<div style="position:absolute;left:1144.5px;top:889.0px;width:8px;height:3px;background:#d8d8d8;"></div>
<div style="position:absolute;right:217px;top:875.5px;font-size:25px;line-height:25px;color:#dcdcdc;letter-spacing:0.5px;white-space:nowrap;-webkit-text-stroke:0.25px #dcdcdc">215<span style="margin:0 3px">|</span>1<span style="margin:0 3px">|</span>000</div>
<div style="position:absolute;left:591px;top:906.5px;width:53.5px;height:33px;background:#5a5a5a;"></div>
<div style="position:absolute;left:647.5px;top:906.5px;width:424.5px;height:33px;background:#5a5a5a;"></div>
<div style="position:absolute;left:1075.5px;top:906.5px;width:42.5px;height:33px;background:#5a5a5a;"></div>
<div style="position:absolute;left:1120.5px;top:906.5px;width:45.5px;height:33px;background:#5a5a5a;"></div>
<div style="position:absolute;left:1168.5px;top:906.5px;width:158.0px;height:33px;background:#5a5a5a;"></div>
<div style="position:absolute;left:1329.5px;top:906.5px;width:127.0px;height:33px;background:#5a5a5a;"></div>
<svg style="position:absolute;left:608.8px;top:915.0px;overflow:visible;" width="17.5" height="16" viewBox="0 0 17.5 16" preserveAspectRatio="none"><path d="M0 0 L17.5 8.0 L0 16 Z" fill="#8e8e8e"/></svg>
<svg style="position:absolute;left:741px;top:913.0px;overflow:visible;" width="28" height="24" viewBox="0 0 28 24" preserveAspectRatio="none"><path d="M1.5 3.5 Q1.5 1.5 3.5 1.5 L24.5 1.5 Q26.5 1.5 26.5 3.5 L26.5 13 L23 22.5 L5 22.5 L1.5 13 Z" fill="#5aaae9" stroke="#10243a" stroke-width="1.9" stroke-linejoin="round"/><path d="M7.2 22.4 Q7.8 16 12.6 11.6" stroke="#fff" stroke-width="5.4" fill="none"/><path d="M8.6 9.4 L16.3 7.6 L15.8 15.2 Z" fill="#000" stroke="#fff" stroke-width="1.3" stroke-linejoin="miter"/><path d="M7.2 22.4 Q7.8 16 12.9 11.3" stroke="#000" stroke-width="3.2" fill="none"/></svg>
<div style="position:absolute;left:789.5px;top:909.5px;font-size:25px;line-height:25px;color:#dcdcdc;font-weight:normal;letter-spacing:0.83px;white-space:nowrap;-webkit-text-stroke:0.25px #dcdcdc">I Will Wait</div>
<div style="position:absolute;left:1079.5px;top:908.5px;width:34px;height:29.5px;border-radius:7px;background:#5aaae9;box-shadow:0 0 0 1px rgba(40,40,50,0.4)"></div>
<div style="position:absolute;left:1144.5px;top:925.0px;width:8px;height:3px;background:#d8d8d8;"></div>
<div style="position:absolute;right:217px;top:911.5px;font-size:25px;line-height:25px;color:#dcdcdc;letter-spacing:0.5px;white-space:nowrap;-webkit-text-stroke:0.25px #dcdcdc">164<span style="margin:0 3px">|</span>1<span style="margin:0 3px">|</span>000</div>
<div style="position:absolute;left:591px;top:942.5px;width:53.5px;height:33px;background:#5a5a5a;"></div>
<div style="position:absolute;left:647.5px;top:942.5px;width:424.5px;height:33px;background:#5a5a5a;"></div>
<div style="position:absolute;left:1075.5px;top:942.5px;width:42.5px;height:33px;background:#5a5a5a;"></div>
<div style="position:absolute;left:1120.5px;top:942.5px;width:45.5px;height:33px;background:#5a5a5a;"></div>
<div style="position:absolute;left:1168.5px;top:942.5px;width:158.0px;height:33px;background:#5a5a5a;"></div>
<div style="position:absolute;left:1329.5px;top:942.5px;width:127.0px;height:33px;background:#5a5a5a;"></div>
<svg style="position:absolute;left:608.8px;top:951.0px;overflow:visible;" width="17.5" height="16" viewBox="0 0 17.5 16" preserveAspectRatio="none"><path d="M0 0 L17.5 8.0 L0 16 Z" fill="#8e8e8e"/></svg>
<svg style="position:absolute;left:741px;top:949.0px;overflow:visible;" width="28" height="24" viewBox="0 0 28 24" preserveAspectRatio="none"><path d="M1.5 3.5 Q1.5 1.5 3.5 1.5 L24.5 1.5 Q26.5 1.5 26.5 3.5 L26.5 13 L23 22.5 L5 22.5 L1.5 13 Z" fill="#f000f0" stroke="#10243a" stroke-width="1.9" stroke-linejoin="round"/><path d="M7.2 22.4 Q7.8 16 12.6 11.6" stroke="#fff" stroke-width="5.4" fill="none"/><path d="M8.6 9.4 L16.3 7.6 L15.8 15.2 Z" fill="#000" stroke="#fff" stroke-width="1.3" stroke-linejoin="miter"/><path d="M7.2 22.4 Q7.8 16 12.9 11.3" stroke="#000" stroke-width="3.2" fill="none"/></svg>
<div style="position:absolute;left:789.5px;top:945.5px;font-size:25px;line-height:25px;color:#dcdcdc;font-weight:normal;letter-spacing:0.9px;white-space:nowrap;-webkit-text-stroke:0.25px #dcdcdc">I'm So Excited</div>
<div style="position:absolute;left:1079.5px;top:944.5px;width:34px;height:29.5px;border-radius:7px;background:#f000f0;box-shadow:0 0 0 1px rgba(40,40,50,0.4)"></div>
<div style="position:absolute;left:1144.5px;top:961.0px;width:8px;height:3px;background:#d8d8d8;"></div>
<div style="position:absolute;right:217px;top:947.5px;font-size:25px;line-height:25px;color:#dcdcdc;letter-spacing:0.5px;white-space:nowrap;-webkit-text-stroke:0.25px #dcdcdc">200<span style="margin:0 3px">|</span>1<span style="margin:0 3px">|</span>000</div>
<div style="position:absolute;left:591px;top:978.5px;width:53.5px;height:33px;background:#5a5a5a;"></div>
<div style="position:absolute;left:647.5px;top:978.5px;width:424.5px;height:33px;background:#5a5a5a;"></div>
<div style="position:absolute;left:1075.5px;top:978.5px;width:42.5px;height:33px;background:#5a5a5a;"></div>
<div style="position:absolute;left:1120.5px;top:978.5px;width:45.5px;height:33px;background:#5a5a5a;"></div>
<div style="position:absolute;left:1168.5px;top:978.5px;width:158.0px;height:33px;background:#5a5a5a;"></div>
<div style="position:absolute;left:1329.5px;top:978.5px;width:127.0px;height:33px;background:#5a5a5a;"></div>
<svg style="position:absolute;left:608.8px;top:987.0px;overflow:visible;" width="17.5" height="16" viewBox="0 0 17.5 16" preserveAspectRatio="none"><path d="M0 0 L17.5 8.0 L0 16 Z" fill="#8e8e8e"/></svg>
<svg style="position:absolute;left:741px;top:985.0px;overflow:visible;" width="28" height="24" viewBox="0 0 28 24" preserveAspectRatio="none"><path d="M1.5 3.5 Q1.5 1.5 3.5 1.5 L24.5 1.5 Q26.5 1.5 26.5 3.5 L26.5 13 L23 22.5 L5 22.5 L1.5 13 Z" fill="#5aaae9" stroke="#10243a" stroke-width="1.9" stroke-linejoin="round"/><path d="M7.2 22.4 Q7.8 16 12.6 11.6" stroke="#fff" stroke-width="5.4" fill="none"/><path d="M8.6 9.4 L16.3 7.6 L15.8 15.2 Z" fill="#000" stroke="#fff" stroke-width="1.3" stroke-linejoin="miter"/><path d="M7.2 22.4 Q7.8 16 12.9 11.3" stroke="#000" stroke-width="3.2" fill="none"/></svg>
<div style="position:absolute;left:789.5px;top:981.5px;font-size:25px;line-height:25px;color:#dcdcdc;font-weight:normal;letter-spacing:1.17px;white-space:nowrap;-webkit-text-stroke:0.25px #dcdcdc">Riptide</div>
<div style="position:absolute;left:1079.5px;top:980.5px;width:34px;height:29.5px;border-radius:7px;background:#5aaae9;box-shadow:0 0 0 1px rgba(40,40,50,0.4)"></div>
<div style="position:absolute;left:1144.5px;top:997.0px;width:8px;height:3px;background:#d8d8d8;"></div>
<div style="position:absolute;right:217px;top:983.5px;font-size:25px;line-height:25px;color:#dcdcdc;letter-spacing:0.5px;white-space:nowrap;-webkit-text-stroke:0.25px #dcdcdc">215<span style="margin:0 3px">|</span>1<span style="margin:0 3px">|</span>000</div>
<div style="position:absolute;left:591px;top:1014.5px;width:53.5px;height:33px;background:#5a5a5a;"></div>
<div style="position:absolute;left:647.5px;top:1014.5px;width:424.5px;height:33px;background:#5a5a5a;"></div>
<div style="position:absolute;left:1075.5px;top:1014.5px;width:42.5px;height:33px;background:#5a5a5a;"></div>
<div style="position:absolute;left:1120.5px;top:1014.5px;width:45.5px;height:33px;background:#5a5a5a;"></div>
<div style="position:absolute;left:1168.5px;top:1014.5px;width:158.0px;height:33px;background:#5a5a5a;"></div>
<div style="position:absolute;left:1329.5px;top:1014.5px;width:127.0px;height:33px;background:#5a5a5a;"></div>
<svg style="position:absolute;left:608.8px;top:1023.0px;overflow:visible;" width="17.5" height="16" viewBox="0 0 17.5 16" preserveAspectRatio="none"><path d="M0 0 L17.5 8.0 L0 16 Z" fill="#8e8e8e"/></svg>
<svg style="position:absolute;left:741px;top:1021.0px;overflow:visible;" width="28" height="24" viewBox="0 0 28 24" preserveAspectRatio="none"><path d="M1.5 3.5 Q1.5 1.5 3.5 1.5 L24.5 1.5 Q26.5 1.5 26.5 3.5 L26.5 13 L23 22.5 L5 22.5 L1.5 13 Z" fill="#f000f0" stroke="#10243a" stroke-width="1.9" stroke-linejoin="round"/><path d="M7.2 22.4 Q7.8 16 12.6 11.6" stroke="#fff" stroke-width="5.4" fill="none"/><path d="M8.6 9.4 L16.3 7.6 L15.8 15.2 Z" fill="#000" stroke="#fff" stroke-width="1.3" stroke-linejoin="miter"/><path d="M7.2 22.4 Q7.8 16 12.9 11.3" stroke="#000" stroke-width="3.2" fill="none"/></svg>
<div style="position:absolute;left:789.5px;top:1017.5px;font-size:25px;line-height:25px;color:#dcdcdc;font-weight:normal;letter-spacing:0.55px;white-space:nowrap;-webkit-text-stroke:0.25px #dcdcdc">All Night Long</div>
<div style="position:absolute;left:1079.5px;top:1016.5px;width:34px;height:29.5px;border-radius:7px;background:#f000f0;box-shadow:0 0 0 1px rgba(40,40,50,0.4)"></div>
<div style="position:absolute;left:1144.5px;top:1033.0px;width:8px;height:3px;background:#d8d8d8;"></div>
<div style="position:absolute;right:217px;top:1019.5px;font-size:25px;line-height:25px;color:#dcdcdc;letter-spacing:0.5px;white-space:nowrap;-webkit-text-stroke:0.25px #dcdcdc">188<span style="margin:0 3px">|</span>1<span style="margin:0 3px">|</span>000</div>
<div style="position:absolute;left:591px;top:1050.5px;width:53.5px;height:33px;background:#5a5a5a;"></div>
<div style="position:absolute;left:647.5px;top:1050.5px;width:424.5px;height:33px;background:#5a5a5a;"></div>
<div style="position:absolute;left:1075.5px;top:1050.5px;width:42.5px;height:33px;background:#5a5a5a;"></div>
<div style="position:absolute;left:1120.5px;top:1050.5px;width:45.5px;height:33px;background:#5a5a5a;"></div>
<div style="position:absolute;left:1168.5px;top:1050.5px;width:158.0px;height:33px;background:#5a5a5a;"></div>
<div style="position:absolute;left:1329.5px;top:1050.5px;width:127.0px;height:33px;background:#5a5a5a;"></div>
<svg style="position:absolute;left:608.8px;top:1059.0px;overflow:visible;" width="17.5" height="16" viewBox="0 0 17.5 16" preserveAspectRatio="none"><path d="M0 0 L17.5 8.0 L0 16 Z" fill="#8e8e8e"/></svg>
<svg style="position:absolute;left:741px;top:1057.0px;overflow:visible;" width="28" height="24" viewBox="0 0 28 24" preserveAspectRatio="none"><path d="M1.5 3.5 Q1.5 1.5 3.5 1.5 L24.5 1.5 Q26.5 1.5 26.5 3.5 L26.5 13 L23 22.5 L5 22.5 L1.5 13 Z" fill="#e6e000" stroke="#10243a" stroke-width="1.9" stroke-linejoin="round"/><path d="M7.2 22.4 Q7.8 16 12.6 11.6" stroke="#fff" stroke-width="5.4" fill="none"/><path d="M8.6 9.4 L16.3 7.6 L15.8 15.2 Z" fill="#000" stroke="#fff" stroke-width="1.3" stroke-linejoin="miter"/><path d="M7.2 22.4 Q7.8 16 12.9 11.3" stroke="#000" stroke-width="3.2" fill="none"/></svg>
<div style="position:absolute;left:789.5px;top:1053.5px;font-size:25px;line-height:25px;color:#dcdcdc;font-weight:normal;letter-spacing:0.4px;white-space:nowrap;-webkit-text-stroke:0.25px #dcdcdc">Have You Seen the Rain</div>
<div style="position:absolute;left:1079.5px;top:1052.5px;width:34px;height:29.5px;border-radius:7px;background:#e6e000;box-shadow:0 0 0 1px rgba(40,40,50,0.4)"></div>
<div style="position:absolute;left:1144.5px;top:1069.0px;width:8px;height:3px;background:#d8d8d8;"></div>
<div style="position:absolute;right:217px;top:1055.5px;font-size:25px;line-height:25px;color:#dcdcdc;letter-spacing:0.5px;white-space:nowrap;-webkit-text-stroke:0.25px #dcdcdc">211<span style="margin:0 3px">|</span>1<span style="margin:0 3px">|</span>000</div>
</div>
<div style="position:absolute;left:1456.5px;top:294.5px;width:38px;height:787px;box-sizing:border-box;border:2px solid #2f2f2f;background:#4d4d4d"></div>
<div style="position:absolute;left:1456.5px;top:294.5px;width:38px;height:787.0px;box-sizing:border-box;border:2px solid #2f2f2f;background:#4d4d4d"></div>
<svg style="position:absolute;left:1470px;top:305.5px;overflow:visible;" width="13.5" height="13" viewBox="0 0 13.5 13" preserveAspectRatio="none"><path d="M0 13 L13.5 13 L6.75 0 Z" fill="#353535"/></svg>
<svg style="position:absolute;left:1470px;top:1058.0px;overflow:visible;" width="13.5" height="13" viewBox="0 0 13.5 13" preserveAspectRatio="none"><path d="M0 0 L13.5 0 L6.75 13 Z" fill="#353535"/></svg>
<div style="position:absolute;left:1466px;top:335px;width:16px;height:460px;border-radius:8px 8px 6px 6px;background:#323232"></div>
<div style="position:absolute;left:585px;top:1093.5px;width:918px;height:27.5px;background:#595959;"></div>
<div style="position:absolute;left:1038px;top:1104px;width:9px;height:9px;border-radius:50%;background:#3e3e3e"></div>
<svg style="position:absolute;left:599px;top:1150px;overflow:visible;filter:drop-shadow(1.5px 1.5px 1px rgba(0,0,0,0.55))" width="54" height="40" viewBox="0 0 54 40" preserveAspectRatio="none"><path d="M1 19.2 L23 1.5 L23 10 L52.5 10 L52.5 29.5 L23 29.5 L23 38 Z" fill="#ababab"/></svg>
<svg style="position:absolute;left:691px;top:1166.5px;overflow:visible;" width="29" height="21.5" viewBox="0 0 28 24" preserveAspectRatio="none"><path d="M1.3 1.3 L20.5 1.3 L26.7 8.5 L26.7 22.7 L1.3 22.7 Z" fill="#abe3ab" stroke="#0c240c" stroke-width="2.4" stroke-linejoin="round"/><path d="M19.2 1.5 L19.2 9.7 L26.5 9.7" fill="none" stroke="#0c240c" stroke-width="2.2"/><rect x="6.8" y="8" width="12" height="2.6" fill="#0c240c"/><rect x="6.8" y="12.8" width="13.5" height="2.6" fill="#0c240c"/><rect x="6.8" y="17.5" width="13.5" height="2.6" fill="#0c240c"/></svg>
<div style="position:absolute;left:738.5px;top:1162.5px;font-size:25px;line-height:25px;color:#dcdcdc;font-weight:normal;letter-spacing:0.4px;white-space:nowrap;-webkit-text-stroke:0.25px #dcdcdc">Set 1</div>
<div style="position:absolute;left:1097px;top:1156px;width:391px;height:37px;border-radius:18.5px;background:#fff;box-shadow:inset 0 4px 4px -1px rgba(0,0,0,0.35)"></div>
<svg style="position:absolute;left:1107px;top:1163px;overflow:visible;" width="26" height="26" viewBox="0 0 26 26" preserveAspectRatio="none"><circle cx="10.5" cy="10.5" r="7.9" fill="none" stroke="#505050" stroke-width="5.2"/><path d="M16 16 L23 23" stroke="#505050" stroke-width="5" stroke-linecap="round"/></svg>
<div style="position:absolute;left:591.6px;top:1217.5px;font-size:18px;line-height:18px;color:#d9d9d9;font-weight:bold;letter-spacing:0px;white-space:nowrap;letter-spacing:0.53px;-webkit-text-stroke:0.45px #d9d9d9">PLAY</div>
<div style="position:absolute;left:812px;top:1217.5px;font-size:18px;line-height:18px;color:#d9d9d9;font-weight:bold;letter-spacing:0px;white-space:nowrap;letter-spacing:0.57px;-webkit-text-stroke:0.45px #d9d9d9">NAME</div>
<div style="position:absolute;left:1036.7px;top:1217.5px;font-size:18px;line-height:18px;color:#d9d9d9;font-weight:bold;letter-spacing:0px;white-space:nowrap;letter-spacing:-0.5px;-webkit-text-stroke:0.45px #d9d9d9">COL</div>
<div style="position:absolute;left:1090.5px;top:1217.5px;font-size:18px;line-height:18px;color:#d9d9d9;font-weight:bold;letter-spacing:0px;white-space:nowrap;letter-spacing:3.1px;-webkit-text-stroke:0.45px #d9d9d9">S#</div>
<div style="position:absolute;left:1129.1000000000001px;top:1217.5px;font-size:18px;line-height:18px;color:#d9d9d9;font-weight:bold;letter-spacing:0px;white-space:nowrap;letter-spacing:1.17px;-webkit-text-stroke:0.45px #d9d9d9">ENDTIME</div>
<div style="position:absolute;left:1291.3px;top:1217.5px;font-size:18px;line-height:18px;color:#d9d9d9;font-weight:bold;letter-spacing:0px;white-space:nowrap;letter-spacing:0.03px;-webkit-text-stroke:0.45px #d9d9d9">COMMENT</div>
<div style="position:absolute;left:647px;top:1234.5px;width:848px;height:2.5px;background:#464646;"></div>
<div style="position:absolute;left:591px;top:1242.5px;width:53.5px;height:33px;background:#5a5a5a;"></div>
<div style="position:absolute;left:647.5px;top:1242.5px;width:386.5px;height:33px;background:#5a5a5a;"></div>
<div style="position:absolute;left:1037.5px;top:1242.5px;width:42.5px;height:33px;background:#5a5a5a;"></div>
<div style="position:absolute;left:1082.5px;top:1242.5px;width:45.5px;height:33px;background:#5a5a5a;"></div>
<div style="position:absolute;left:1130.5px;top:1242.5px;width:158.0px;height:33px;background:#5a5a5a;"></div>
<div style="position:absolute;left:1291.5px;top:1242.5px;width:165.0px;height:33px;background:#5a5a5a;"></div>
<svg style="position:absolute;left:608px;top:1251.5px;overflow:visible;" width="17.5" height="18.5" viewBox="0 0 17.5 18.5" preserveAspectRatio="none"><path d="M0 0 L17.5 9.25 L0 18.5 Z" fill="#10e010"/></svg>
<svg style="position:absolute;left:703px;top:1249.0px;overflow:visible;" width="28" height="24" viewBox="0 0 28 24" preserveAspectRatio="none"><path d="M1.5 3.5 Q1.5 1.5 3.5 1.5 L24.5 1.5 Q26.5 1.5 26.5 3.5 L26.5 13 L23 22.5 L5 22.5 L1.5 13 Z" fill="#5aaae9" stroke="#10243a" stroke-width="1.9" stroke-linejoin="round"/><path d="M7.2 22.4 Q7.8 16 12.6 11.6" stroke="#fff" stroke-width="5.4" fill="none"/><path d="M8.6 9.4 L16.3 7.6 L15.8 15.2 Z" fill="#000" stroke="#fff" stroke-width="1.3" stroke-linejoin="miter"/><path d="M7.2 22.4 Q7.8 16 12.9 11.3" stroke="#000" stroke-width="3.2" fill="none"/></svg>
<div style="position:absolute;left:751.5px;top:1245.5px;font-size:25px;line-height:25px;color:#dcdcdc;font-weight:normal;letter-spacing:0.54px;white-space:nowrap;-webkit-text-stroke:0.25px #dcdcdc">Livin&#8217; On a Prayer</div>
<div style="position:absolute;left:1041.5px;top:1244.5px;width:34px;height:29.5px;border-radius:7px;background:#5aaae9;box-shadow:0 0 0 1px rgba(40,40,50,0.4)"></div>
<div style="position:absolute;left:1106.5px;top:1261.0px;width:8px;height:3px;background:#d8d8d8;"></div>
<div style="position:absolute;right:255px;top:1247.5px;font-size:25px;line-height:25px;color:#dcdcdc;letter-spacing:0.5px;white-space:nowrap;-webkit-text-stroke:0.25px #dcdcdc">202<span style="margin:0 3px">|</span>1<span style="margin:0 3px">|</span>000</div>
<div style="position:absolute;left:591px;top:1278.5px;width:53.5px;height:33px;background:#5a5a5a;"></div>
<div style="position:absolute;left:647.5px;top:1278.5px;width:386.5px;height:33px;background:#5a5a5a;"></div>
<div style="position:absolute;left:1037.5px;top:1278.5px;width:42.5px;height:33px;background:#5a5a5a;"></div>
<div style="position:absolute;left:1082.5px;top:1278.5px;width:45.5px;height:33px;background:#5a5a5a;"></div>
<div style="position:absolute;left:1130.5px;top:1278.5px;width:158.0px;height:33px;background:#5a5a5a;"></div>
<div style="position:absolute;left:1291.5px;top:1278.5px;width:165.0px;height:33px;background:#5a5a5a;"></div>
<svg style="position:absolute;left:608.8px;top:1287.0px;overflow:visible;" width="17.5" height="16" viewBox="0 0 17.5 16" preserveAspectRatio="none"><path d="M0 0 L17.5 8.0 L0 16 Z" fill="#8e8e8e"/></svg>
<svg style="position:absolute;left:703px;top:1285.0px;overflow:visible;" width="28" height="24" viewBox="0 0 28 24" preserveAspectRatio="none"><path d="M1.5 3.5 Q1.5 1.5 3.5 1.5 L24.5 1.5 Q26.5 1.5 26.5 3.5 L26.5 13 L23 22.5 L5 22.5 L1.5 13 Z" fill="#5a40f0" stroke="#10243a" stroke-width="1.9" stroke-linejoin="round"/><path d="M7.2 22.4 Q7.8 16 12.6 11.6" stroke="#fff" stroke-width="5.4" fill="none"/><path d="M8.6 9.4 L16.3 7.6 L15.8 15.2 Z" fill="#000" stroke="#fff" stroke-width="1.3" stroke-linejoin="miter"/><path d="M7.2 22.4 Q7.8 16 12.9 11.3" stroke="#000" stroke-width="3.2" fill="none"/></svg>
<div style="position:absolute;left:751.5px;top:1281.5px;font-size:25px;line-height:25px;color:#dcdcdc;font-weight:normal;letter-spacing:0.67px;white-space:nowrap;-webkit-text-stroke:0.25px #dcdcdc">Ordinary People</div>
<div style="position:absolute;left:1041.5px;top:1280.5px;width:34px;height:29.5px;border-radius:7px;background:#5a40f0;box-shadow:0 0 0 1px rgba(40,40,50,0.4)"></div>
<div style="position:absolute;left:1106.5px;top:1297.0px;width:8px;height:3px;background:#d8d8d8;"></div>
<div style="position:absolute;right:255px;top:1283.5px;font-size:25px;line-height:25px;color:#dcdcdc;letter-spacing:0.5px;white-space:nowrap;-webkit-text-stroke:0.25px #dcdcdc">215<span style="margin:0 3px">|</span>1<span style="margin:0 3px">|</span>000</div>
<div style="position:absolute;left:591px;top:1314.5px;width:53.5px;height:33px;background:#5a5a5a;"></div>
<div style="position:absolute;left:647.5px;top:1314.5px;width:386.5px;height:33px;background:#5a5a5a;"></div>
<div style="position:absolute;left:1037.5px;top:1314.5px;width:42.5px;height:33px;background:#5a5a5a;"></div>
<div style="position:absolute;left:1082.5px;top:1314.5px;width:45.5px;height:33px;background:#5a5a5a;"></div>
<div style="position:absolute;left:1130.5px;top:1314.5px;width:158.0px;height:33px;background:#5a5a5a;"></div>
<div style="position:absolute;left:1291.5px;top:1314.5px;width:165.0px;height:33px;background:#5a5a5a;"></div>
<svg style="position:absolute;left:608.8px;top:1323.0px;overflow:visible;" width="17.5" height="16" viewBox="0 0 17.5 16" preserveAspectRatio="none"><path d="M0 0 L17.5 8.0 L0 16 Z" fill="#8e8e8e"/></svg>
<svg style="position:absolute;left:703px;top:1321.0px;overflow:visible;" width="28" height="24" viewBox="0 0 28 24" preserveAspectRatio="none"><path d="M1.5 3.5 Q1.5 1.5 3.5 1.5 L24.5 1.5 Q26.5 1.5 26.5 3.5 L26.5 13 L23 22.5 L5 22.5 L1.5 13 Z" fill="#5aaae9" stroke="#10243a" stroke-width="1.9" stroke-linejoin="round"/><path d="M7.2 22.4 Q7.8 16 12.6 11.6" stroke="#fff" stroke-width="5.4" fill="none"/><path d="M8.6 9.4 L16.3 7.6 L15.8 15.2 Z" fill="#000" stroke="#fff" stroke-width="1.3" stroke-linejoin="miter"/><path d="M7.2 22.4 Q7.8 16 12.9 11.3" stroke="#000" stroke-width="3.2" fill="none"/></svg>
<div style="position:absolute;left:751.5px;top:1317.5px;font-size:25px;line-height:25px;color:#dcdcdc;font-weight:normal;letter-spacing:0.83px;white-space:nowrap;-webkit-text-stroke:0.25px #dcdcdc">I Will Wait</div>
<div style="position:absolute;left:1041.5px;top:1316.5px;width:34px;height:29.5px;border-radius:7px;background:#5aaae9;box-shadow:0 0 0 1px rgba(40,40,50,0.4)"></div>
<div style="position:absolute;left:1106.5px;top:1333.0px;width:8px;height:3px;background:#d8d8d8;"></div>
<div style="position:absolute;right:255px;top:1319.5px;font-size:25px;line-height:25px;color:#dcdcdc;letter-spacing:0.5px;white-space:nowrap;-webkit-text-stroke:0.25px #dcdcdc">164<span style="margin:0 3px">|</span>1<span style="margin:0 3px">|</span>000</div>
<div style="position:absolute;left:591px;top:1350.5px;width:53.5px;height:33px;background:#5a5a5a;"></div>
<div style="position:absolute;left:647.5px;top:1350.5px;width:386.5px;height:33px;background:#5a5a5a;"></div>
<div style="position:absolute;left:1037.5px;top:1350.5px;width:42.5px;height:33px;background:#5a5a5a;"></div>
<div style="position:absolute;left:1082.5px;top:1350.5px;width:45.5px;height:33px;background:#5a5a5a;"></div>
<div style="position:absolute;left:1130.5px;top:1350.5px;width:158.0px;height:33px;background:#5a5a5a;"></div>
<div style="position:absolute;left:1291.5px;top:1350.5px;width:165.0px;height:33px;background:#5a5a5a;"></div>
<svg style="position:absolute;left:608.8px;top:1359.0px;overflow:visible;" width="17.5" height="16" viewBox="0 0 17.5 16" preserveAspectRatio="none"><path d="M0 0 L17.5 8.0 L0 16 Z" fill="#8e8e8e"/></svg>
<svg style="position:absolute;left:703px;top:1357.0px;overflow:visible;" width="28" height="24" viewBox="0 0 28 24" preserveAspectRatio="none"><path d="M1.5 3.5 Q1.5 1.5 3.5 1.5 L24.5 1.5 Q26.5 1.5 26.5 3.5 L26.5 13 L23 22.5 L5 22.5 L1.5 13 Z" fill="#f000f0" stroke="#10243a" stroke-width="1.9" stroke-linejoin="round"/><path d="M7.2 22.4 Q7.8 16 12.6 11.6" stroke="#fff" stroke-width="5.4" fill="none"/><path d="M8.6 9.4 L16.3 7.6 L15.8 15.2 Z" fill="#000" stroke="#fff" stroke-width="1.3" stroke-linejoin="miter"/><path d="M7.2 22.4 Q7.8 16 12.9 11.3" stroke="#000" stroke-width="3.2" fill="none"/></svg>
<div style="position:absolute;left:751.5px;top:1353.5px;font-size:25px;line-height:25px;color:#dcdcdc;font-weight:normal;letter-spacing:0.9px;white-space:nowrap;-webkit-text-stroke:0.25px #dcdcdc">I'm So Excited</div>
<div style="position:absolute;left:1041.5px;top:1352.5px;width:34px;height:29.5px;border-radius:7px;background:#f000f0;box-shadow:0 0 0 1px rgba(40,40,50,0.4)"></div>
<div style="position:absolute;left:1106.5px;top:1369.0px;width:8px;height:3px;background:#d8d8d8;"></div>
<div style="position:absolute;right:255px;top:1355.5px;font-size:25px;line-height:25px;color:#dcdcdc;letter-spacing:0.5px;white-space:nowrap;-webkit-text-stroke:0.25px #dcdcdc">200<span style="margin:0 3px">|</span>1<span style="margin:0 3px">|</span>000</div>
<div style="position:absolute;left:591px;top:1386.5px;width:53.5px;height:33px;background:#5a5a5a;"></div>
<div style="position:absolute;left:647.5px;top:1386.5px;width:386.5px;height:33px;background:#5a5a5a;"></div>
<div style="position:absolute;left:1037.5px;top:1386.5px;width:42.5px;height:33px;background:#5a5a5a;"></div>
<div style="position:absolute;left:1082.5px;top:1386.5px;width:45.5px;height:33px;background:#5a5a5a;"></div>
<div style="position:absolute;left:1130.5px;top:1386.5px;width:158.0px;height:33px;background:#5a5a5a;"></div>
<div style="position:absolute;left:1291.5px;top:1386.5px;width:165.0px;height:33px;background:#5a5a5a;"></div>
<svg style="position:absolute;left:608.8px;top:1395.0px;overflow:visible;" width="17.5" height="16" viewBox="0 0 17.5 16" preserveAspectRatio="none"><path d="M0 0 L17.5 8.0 L0 16 Z" fill="#8e8e8e"/></svg>
<svg style="position:absolute;left:703px;top:1393.0px;overflow:visible;" width="28" height="24" viewBox="0 0 28 24" preserveAspectRatio="none"><path d="M1.5 3.5 Q1.5 1.5 3.5 1.5 L24.5 1.5 Q26.5 1.5 26.5 3.5 L26.5 13 L23 22.5 L5 22.5 L1.5 13 Z" fill="#5aaae9" stroke="#10243a" stroke-width="1.9" stroke-linejoin="round"/><path d="M7.2 22.4 Q7.8 16 12.6 11.6" stroke="#fff" stroke-width="5.4" fill="none"/><path d="M8.6 9.4 L16.3 7.6 L15.8 15.2 Z" fill="#000" stroke="#fff" stroke-width="1.3" stroke-linejoin="miter"/><path d="M7.2 22.4 Q7.8 16 12.9 11.3" stroke="#000" stroke-width="3.2" fill="none"/></svg>
<div style="position:absolute;left:751.5px;top:1389.5px;font-size:25px;line-height:25px;color:#dcdcdc;font-weight:normal;letter-spacing:1.17px;white-space:nowrap;-webkit-text-stroke:0.25px #dcdcdc">Riptide</div>
<div style="position:absolute;left:1041.5px;top:1388.5px;width:34px;height:29.5px;border-radius:7px;background:#5aaae9;box-shadow:0 0 0 1px rgba(40,40,50,0.4)"></div>
<div style="position:absolute;left:1106.5px;top:1405.0px;width:8px;height:3px;background:#d8d8d8;"></div>
<div style="position:absolute;right:255px;top:1391.5px;font-size:25px;line-height:25px;color:#dcdcdc;letter-spacing:0.5px;white-space:nowrap;-webkit-text-stroke:0.25px #dcdcdc">215<span style="margin:0 3px">|</span>1<span style="margin:0 3px">|</span>000</div>
<div style="position:absolute;left:591px;top:1422.5px;width:53.5px;height:33px;background:#5a5a5a;"></div>
<div style="position:absolute;left:647.5px;top:1422.5px;width:386.5px;height:33px;background:#5a5a5a;"></div>
<div style="position:absolute;left:1037.5px;top:1422.5px;width:42.5px;height:33px;background:#5a5a5a;"></div>
<div style="position:absolute;left:1082.5px;top:1422.5px;width:45.5px;height:33px;background:#5a5a5a;"></div>
<div style="position:absolute;left:1130.5px;top:1422.5px;width:158.0px;height:33px;background:#5a5a5a;"></div>
<div style="position:absolute;left:1291.5px;top:1422.5px;width:165.0px;height:33px;background:#5a5a5a;"></div>
<svg style="position:absolute;left:608.8px;top:1431.0px;overflow:visible;" width="17.5" height="16" viewBox="0 0 17.5 16" preserveAspectRatio="none"><path d="M0 0 L17.5 8.0 L0 16 Z" fill="#8e8e8e"/></svg>
<svg style="position:absolute;left:703px;top:1429.0px;overflow:visible;" width="28" height="24" viewBox="0 0 28 24" preserveAspectRatio="none"><path d="M1.5 3.5 Q1.5 1.5 3.5 1.5 L24.5 1.5 Q26.5 1.5 26.5 3.5 L26.5 13 L23 22.5 L5 22.5 L1.5 13 Z" fill="#f000f0" stroke="#10243a" stroke-width="1.9" stroke-linejoin="round"/><path d="M7.2 22.4 Q7.8 16 12.6 11.6" stroke="#fff" stroke-width="5.4" fill="none"/><path d="M8.6 9.4 L16.3 7.6 L15.8 15.2 Z" fill="#000" stroke="#fff" stroke-width="1.3" stroke-linejoin="miter"/><path d="M7.2 22.4 Q7.8 16 12.9 11.3" stroke="#000" stroke-width="3.2" fill="none"/></svg>
<div style="position:absolute;left:751.5px;top:1425.5px;font-size:25px;line-height:25px;color:#dcdcdc;font-weight:normal;letter-spacing:0.55px;white-space:nowrap;-webkit-text-stroke:0.25px #dcdcdc">All Night Long</div>
<div style="position:absolute;left:1041.5px;top:1424.5px;width:34px;height:29.5px;border-radius:7px;background:#f000f0;box-shadow:0 0 0 1px rgba(40,40,50,0.4)"></div>
<div style="position:absolute;left:1106.5px;top:1441.0px;width:8px;height:3px;background:#d8d8d8;"></div>
<div style="position:absolute;right:255px;top:1427.5px;font-size:25px;line-height:25px;color:#dcdcdc;letter-spacing:0.5px;white-space:nowrap;-webkit-text-stroke:0.25px #dcdcdc">188<span style="margin:0 3px">|</span>1<span style="margin:0 3px">|</span>000</div>
<div style="position:absolute;left:591px;top:1458.5px;width:53.5px;height:33px;background:#5a5a5a;"></div>
<div style="position:absolute;left:647.5px;top:1458.5px;width:386.5px;height:33px;background:#5a5a5a;"></div>
<div style="position:absolute;left:1037.5px;top:1458.5px;width:42.5px;height:33px;background:#5a5a5a;"></div>
<div style="position:absolute;left:1082.5px;top:1458.5px;width:45.5px;height:33px;background:#5a5a5a;"></div>
<div style="position:absolute;left:1130.5px;top:1458.5px;width:158.0px;height:33px;background:#5a5a5a;"></div>
<div style="position:absolute;left:1291.5px;top:1458.5px;width:165.0px;height:33px;background:#5a5a5a;"></div>
<svg style="position:absolute;left:608.8px;top:1467.0px;overflow:visible;" width="17.5" height="16" viewBox="0 0 17.5 16" preserveAspectRatio="none"><path d="M0 0 L17.5 8.0 L0 16 Z" fill="#8e8e8e"/></svg>
<svg style="position:absolute;left:703px;top:1465.0px;overflow:visible;" width="28" height="24" viewBox="0 0 28 24" preserveAspectRatio="none"><path d="M1.5 3.5 Q1.5 1.5 3.5 1.5 L24.5 1.5 Q26.5 1.5 26.5 3.5 L26.5 13 L23 22.5 L5 22.5 L1.5 13 Z" fill="#e6e000" stroke="#10243a" stroke-width="1.9" stroke-linejoin="round"/><path d="M7.2 22.4 Q7.8 16 12.6 11.6" stroke="#fff" stroke-width="5.4" fill="none"/><path d="M8.6 9.4 L16.3 7.6 L15.8 15.2 Z" fill="#000" stroke="#fff" stroke-width="1.3" stroke-linejoin="miter"/><path d="M7.2 22.4 Q7.8 16 12.9 11.3" stroke="#000" stroke-width="3.2" fill="none"/></svg>
<div style="position:absolute;left:751.5px;top:1461.5px;font-size:25px;line-height:25px;color:#dcdcdc;font-weight:normal;letter-spacing:0.4px;white-space:nowrap;-webkit-text-stroke:0.25px #dcdcdc">Have You Seen the Rain</div>
<div style="position:absolute;left:1041.5px;top:1460.5px;width:34px;height:29.5px;border-radius:7px;background:#e6e000;box-shadow:0 0 0 1px rgba(40,40,50,0.4)"></div>
<div style="position:absolute;left:1106.5px;top:1477.0px;width:8px;height:3px;background:#d8d8d8;"></div>
<div style="position:absolute;right:255px;top:1463.5px;font-size:25px;line-height:25px;color:#dcdcdc;letter-spacing:0.5px;white-space:nowrap;-webkit-text-stroke:0.25px #dcdcdc">211<span style="margin:0 3px">|</span>1<span style="margin:0 3px">|</span>000</div>
<div style="position:absolute;left:591px;top:1494.5px;width:53.5px;height:33px;background:#5a5a5a;"></div>
<div style="position:absolute;left:647.5px;top:1494.5px;width:386.5px;height:33px;background:#5a5a5a;"></div>
<div style="position:absolute;left:1037.5px;top:1494.5px;width:42.5px;height:33px;background:#5a5a5a;"></div>
<div style="position:absolute;left:1082.5px;top:1494.5px;width:45.5px;height:33px;background:#5a5a5a;"></div>
<div style="position:absolute;left:1130.5px;top:1494.5px;width:158.0px;height:33px;background:#5a5a5a;"></div>
<div style="position:absolute;left:1291.5px;top:1494.5px;width:165.0px;height:33px;background:#5a5a5a;"></div>
<svg style="position:absolute;left:608.8px;top:1503.0px;overflow:visible;" width="17.5" height="16" viewBox="0 0 17.5 16" preserveAspectRatio="none"><path d="M0 0 L17.5 8.0 L0 16 Z" fill="#8e8e8e"/></svg>
<svg style="position:absolute;left:703px;top:1501.0px;overflow:visible;" width="28" height="24" viewBox="0 0 28 24" preserveAspectRatio="none"><path d="M1.5 3.5 Q1.5 1.5 3.5 1.5 L24.5 1.5 Q26.5 1.5 26.5 3.5 L26.5 13 L23 22.5 L5 22.5 L1.5 13 Z" fill="#e6e000" stroke="#10243a" stroke-width="1.9" stroke-linejoin="round"/><path d="M7.2 22.4 Q7.8 16 12.6 11.6" stroke="#fff" stroke-width="5.4" fill="none"/><path d="M8.6 9.4 L16.3 7.6 L15.8 15.2 Z" fill="#000" stroke="#fff" stroke-width="1.3" stroke-linejoin="miter"/><path d="M7.2 22.4 Q7.8 16 12.9 11.3" stroke="#000" stroke-width="3.2" fill="none"/></svg>
<div style="position:absolute;left:751.5px;top:1497.5px;font-size:25px;line-height:25px;color:#dcdcdc;font-weight:normal;letter-spacing:0.73px;white-space:nowrap;-webkit-text-stroke:0.25px #dcdcdc">Sweet Home Alabama</div>
<div style="position:absolute;left:1041.5px;top:1496.5px;width:34px;height:29.5px;border-radius:7px;background:#e6e000;box-shadow:0 0 0 1px rgba(40,40,50,0.4)"></div>
<div style="position:absolute;left:1106.5px;top:1513.0px;width:8px;height:3px;background:#d8d8d8;"></div>
<div style="position:absolute;right:255px;top:1499.5px;font-size:25px;line-height:25px;color:#dcdcdc;letter-spacing:0.5px;white-space:nowrap;-webkit-text-stroke:0.25px #dcdcdc">212<span style="margin:0 3px">|</span>1<span style="margin:0 3px">|</span>000</div>
<div style="position:absolute;left:591px;top:1530.5px;width:53.5px;height:33px;background:#5a5a5a;"></div>
<div style="position:absolute;left:647.5px;top:1530.5px;width:386.5px;height:33px;background:#5a5a5a;"></div>
<div style="position:absolute;left:1037.5px;top:1530.5px;width:42.5px;height:33px;background:#5a5a5a;"></div>
<div style="position:absolute;left:1082.5px;top:1530.5px;width:45.5px;height:33px;background:#5a5a5a;"></div>
<div style="position:absolute;left:1130.5px;top:1530.5px;width:158.0px;height:33px;background:#5a5a5a;"></div>
<div style="position:absolute;left:1291.5px;top:1530.5px;width:165.0px;height:33px;background:#5a5a5a;"></div>
<svg style="position:absolute;left:608.8px;top:1539.0px;overflow:visible;" width="17.5" height="16" viewBox="0 0 17.5 16" preserveAspectRatio="none"><path d="M0 0 L17.5 8.0 L0 16 Z" fill="#8e8e8e"/></svg>
<svg style="position:absolute;left:703px;top:1537.0px;overflow:visible;" width="28" height="24" viewBox="0 0 28 24" preserveAspectRatio="none"><path d="M1.5 3.5 Q1.5 1.5 3.5 1.5 L24.5 1.5 Q26.5 1.5 26.5 3.5 L26.5 13 L23 22.5 L5 22.5 L1.5 13 Z" fill="#f000f0" stroke="#10243a" stroke-width="1.9" stroke-linejoin="round"/><path d="M7.2 22.4 Q7.8 16 12.6 11.6" stroke="#fff" stroke-width="5.4" fill="none"/><path d="M8.6 9.4 L16.3 7.6 L15.8 15.2 Z" fill="#000" stroke="#fff" stroke-width="1.3" stroke-linejoin="miter"/><path d="M7.2 22.4 Q7.8 16 12.9 11.3" stroke="#000" stroke-width="3.2" fill="none"/></svg>
<div style="position:absolute;left:751.5px;top:1533.5px;font-size:25px;line-height:25px;color:#dcdcdc;font-weight:normal;letter-spacing:0.82px;white-space:nowrap;-webkit-text-stroke:0.25px #dcdcdc">Faith</div>
<div style="position:absolute;left:1041.5px;top:1532.5px;width:34px;height:29.5px;border-radius:7px;background:#f000f0;box-shadow:0 0 0 1px rgba(40,40,50,0.4)"></div>
<div style="position:absolute;left:1106.5px;top:1549.0px;width:8px;height:3px;background:#d8d8d8;"></div>
<div style="position:absolute;right:255px;top:1535.5px;font-size:25px;line-height:25px;color:#dcdcdc;letter-spacing:0.5px;white-space:nowrap;-webkit-text-stroke:0.25px #dcdcdc">239<span style="margin:0 3px">|</span>1<span style="margin:0 3px">|</span>000</div>
<div style="position:absolute;left:591px;top:1566.5px;width:53.5px;height:33px;background:#5a5a5a;"></div>
<div style="position:absolute;left:647.5px;top:1566.5px;width:386.5px;height:33px;background:#5a5a5a;"></div>
<div style="position:absolute;left:1037.5px;top:1566.5px;width:42.5px;height:33px;background:#5a5a5a;"></div>
<div style="position:absolute;left:1082.5px;top:1566.5px;width:45.5px;height:33px;background:#5a5a5a;"></div>
<div style="position:absolute;left:1130.5px;top:1566.5px;width:158.0px;height:33px;background:#5a5a5a;"></div>
<div style="position:absolute;left:1291.5px;top:1566.5px;width:165.0px;height:33px;background:#5a5a5a;"></div>
<svg style="position:absolute;left:608.8px;top:1575.0px;overflow:visible;" width="17.5" height="16" viewBox="0 0 17.5 16" preserveAspectRatio="none"><path d="M0 0 L17.5 8.0 L0 16 Z" fill="#8e8e8e"/></svg>
<svg style="position:absolute;left:703px;top:1573.0px;overflow:visible;" width="28" height="24" viewBox="0 0 28 24" preserveAspectRatio="none"><path d="M1.5 3.5 Q1.5 1.5 3.5 1.5 L24.5 1.5 Q26.5 1.5 26.5 3.5 L26.5 13 L23 22.5 L5 22.5 L1.5 13 Z" fill="#00e6c4" stroke="#10243a" stroke-width="1.9" stroke-linejoin="round"/><path d="M7.2 22.4 Q7.8 16 12.6 11.6" stroke="#fff" stroke-width="5.4" fill="none"/><path d="M8.6 9.4 L16.3 7.6 L15.8 15.2 Z" fill="#000" stroke="#fff" stroke-width="1.3" stroke-linejoin="miter"/><path d="M7.2 22.4 Q7.8 16 12.9 11.3" stroke="#000" stroke-width="3.2" fill="none"/></svg>
<div style="position:absolute;left:751.5px;top:1569.5px;font-size:25px;line-height:25px;color:#dcdcdc;font-weight:normal;letter-spacing:0.24px;white-space:nowrap;-webkit-text-stroke:0.25px #dcdcdc">All Mixed Up</div>
<div style="position:absolute;left:1041.5px;top:1568.5px;width:34px;height:29.5px;border-radius:7px;background:#00e6c4;box-shadow:0 0 0 1px rgba(40,40,50,0.4)"></div>
<div style="position:absolute;left:1106.5px;top:1585.0px;width:8px;height:3px;background:#d8d8d8;"></div>
<div style="position:absolute;right:255px;top:1571.5px;font-size:25px;line-height:25px;color:#dcdcdc;letter-spacing:0.5px;white-space:nowrap;-webkit-text-stroke:0.25px #dcdcdc">297<span style="margin:0 3px">|</span>1<span style="margin:0 3px">|</span>000</div>
<div style="position:absolute;left:591px;top:1602.5px;width:53.5px;height:33px;background:#5a5a5a;"></div>
<div style="position:absolute;left:647.5px;top:1602.5px;width:386.5px;height:33px;background:#5a5a5a;"></div>
<div style="position:absolute;left:1037.5px;top:1602.5px;width:42.5px;height:33px;background:#5a5a5a;"></div>
<div style="position:absolute;left:1082.5px;top:1602.5px;width:45.5px;height:33px;background:#5a5a5a;"></div>
<div style="position:absolute;left:1130.5px;top:1602.5px;width:158.0px;height:33px;background:#5a5a5a;"></div>
<div style="position:absolute;left:1291.5px;top:1602.5px;width:165.0px;height:33px;background:#5a5a5a;"></div>
<svg style="position:absolute;left:608.8px;top:1611.0px;overflow:visible;" width="17.5" height="16" viewBox="0 0 17.5 16" preserveAspectRatio="none"><path d="M0 0 L17.5 8.0 L0 16 Z" fill="#8e8e8e"/></svg>
<svg style="position:absolute;left:703px;top:1609.0px;overflow:visible;" width="28" height="24" viewBox="0 0 28 24" preserveAspectRatio="none"><path d="M1.5 3.5 Q1.5 1.5 3.5 1.5 L24.5 1.5 Q26.5 1.5 26.5 3.5 L26.5 13 L23 22.5 L5 22.5 L1.5 13 Z" fill="#5a40f0" stroke="#10243a" stroke-width="1.9" stroke-linejoin="round"/><path d="M7.2 22.4 Q7.8 16 12.6 11.6" stroke="#fff" stroke-width="5.4" fill="none"/><path d="M8.6 9.4 L16.3 7.6 L15.8 15.2 Z" fill="#000" stroke="#fff" stroke-width="1.3" stroke-linejoin="miter"/><path d="M7.2 22.4 Q7.8 16 12.9 11.3" stroke="#000" stroke-width="3.2" fill="none"/></svg>
<div style="position:absolute;left:751.5px;top:1605.5px;font-size:25px;line-height:25px;color:#dcdcdc;font-weight:normal;letter-spacing:0.32px;white-space:nowrap;-webkit-text-stroke:0.25px #dcdcdc">Sun Comes Up</div>
<div style="position:absolute;left:1041.5px;top:1604.5px;width:34px;height:29.5px;border-radius:7px;background:#5a40f0;box-shadow:0 0 0 1px rgba(40,40,50,0.4)"></div>
<div style="position:absolute;left:1106.5px;top:1621.0px;width:8px;height:3px;background:#d8d8d8;"></div>
<div style="position:absolute;right:255px;top:1607.5px;font-size:25px;line-height:25px;color:#dcdcdc;letter-spacing:0.5px;white-space:nowrap;-webkit-text-stroke:0.25px #dcdcdc">182<span style="margin:0 3px">|</span>1<span style="margin:0 3px">|</span>000</div>
<div style="position:absolute;left:591px;top:1638.5px;width:53.5px;height:33px;background:#5a5a5a;"></div>
<div style="position:absolute;left:647.5px;top:1638.5px;width:386.5px;height:33px;background:#5a5a5a;"></div>
<div style="position:absolute;left:1037.5px;top:1638.5px;width:42.5px;height:33px;background:#5a5a5a;"></div>
<div style="position:absolute;left:1082.5px;top:1638.5px;width:45.5px;height:33px;background:#5a5a5a;"></div>
<div style="position:absolute;left:1130.5px;top:1638.5px;width:158.0px;height:33px;background:#5a5a5a;"></div>
<div style="position:absolute;left:1291.5px;top:1638.5px;width:165.0px;height:33px;background:#5a5a5a;"></div>
<svg style="position:absolute;left:608.8px;top:1647.0px;overflow:visible;" width="17.5" height="16" viewBox="0 0 17.5 16" preserveAspectRatio="none"><path d="M0 0 L17.5 8.0 L0 16 Z" fill="#8e8e8e"/></svg>
<svg style="position:absolute;left:703px;top:1645.0px;overflow:visible;" width="28" height="24" viewBox="0 0 28 24" preserveAspectRatio="none"><path d="M1.5 3.5 Q1.5 1.5 3.5 1.5 L24.5 1.5 Q26.5 1.5 26.5 3.5 L26.5 13 L23 22.5 L5 22.5 L1.5 13 Z" fill="#00e6c4" stroke="#10243a" stroke-width="1.9" stroke-linejoin="round"/><path d="M7.2 22.4 Q7.8 16 12.6 11.6" stroke="#fff" stroke-width="5.4" fill="none"/><path d="M8.6 9.4 L16.3 7.6 L15.8 15.2 Z" fill="#000" stroke="#fff" stroke-width="1.3" stroke-linejoin="miter"/><path d="M7.2 22.4 Q7.8 16 12.9 11.3" stroke="#000" stroke-width="3.2" fill="none"/></svg>
<div style="position:absolute;left:751.5px;top:1641.5px;font-size:25px;line-height:25px;color:#dcdcdc;font-weight:normal;letter-spacing:0.98px;white-space:nowrap;-webkit-text-stroke:0.25px #dcdcdc">Enter Sandman</div>
<div style="position:absolute;left:1041.5px;top:1640.5px;width:34px;height:29.5px;border-radius:7px;background:#00e6c4;box-shadow:0 0 0 1px rgba(40,40,50,0.4)"></div>
<div style="position:absolute;left:1106.5px;top:1657.0px;width:8px;height:3px;background:#d8d8d8;"></div>
<div style="position:absolute;right:255px;top:1643.5px;font-size:25px;line-height:25px;color:#dcdcdc;letter-spacing:0.5px;white-space:nowrap;-webkit-text-stroke:0.25px #dcdcdc">209<span style="margin:0 3px">|</span>1<span style="margin:0 3px">|</span>000</div>
<div style="position:absolute;left:591px;top:1674.5px;width:53.5px;height:33px;background:#5a5a5a;"></div>
<div style="position:absolute;left:647.5px;top:1674.5px;width:386.5px;height:33px;background:#5a5a5a;"></div>
<div style="position:absolute;left:1037.5px;top:1674.5px;width:42.5px;height:33px;background:#5a5a5a;"></div>
<div style="position:absolute;left:1082.5px;top:1674.5px;width:45.5px;height:33px;background:#5a5a5a;"></div>
<div style="position:absolute;left:1130.5px;top:1674.5px;width:158.0px;height:33px;background:#5a5a5a;"></div>
<div style="position:absolute;left:1291.5px;top:1674.5px;width:165.0px;height:33px;background:#5a5a5a;"></div>
<svg style="position:absolute;left:608.8px;top:1683.0px;overflow:visible;" width="17.5" height="16" viewBox="0 0 17.5 16" preserveAspectRatio="none"><path d="M0 0 L17.5 8.0 L0 16 Z" fill="#8e8e8e"/></svg>
<svg style="position:absolute;left:703px;top:1681.0px;overflow:visible;" width="28" height="24" viewBox="0 0 28 24" preserveAspectRatio="none"><path d="M1.5 3.5 Q1.5 1.5 3.5 1.5 L24.5 1.5 Q26.5 1.5 26.5 3.5 L26.5 13 L23 22.5 L5 22.5 L1.5 13 Z" fill="#5aaae9" stroke="#10243a" stroke-width="1.9" stroke-linejoin="round"/><path d="M7.2 22.4 Q7.8 16 12.6 11.6" stroke="#fff" stroke-width="5.4" fill="none"/><path d="M8.6 9.4 L16.3 7.6 L15.8 15.2 Z" fill="#000" stroke="#fff" stroke-width="1.3" stroke-linejoin="miter"/><path d="M7.2 22.4 Q7.8 16 12.9 11.3" stroke="#000" stroke-width="3.2" fill="none"/></svg>
<div style="position:absolute;left:751.5px;top:1677.5px;font-size:25px;line-height:25px;color:#dcdcdc;font-weight:normal;letter-spacing:0.45px;white-space:nowrap;-webkit-text-stroke:0.25px #dcdcdc">Stand By Me</div>
<div style="position:absolute;left:1041.5px;top:1676.5px;width:34px;height:29.5px;border-radius:7px;background:#5aaae9;box-shadow:0 0 0 1px rgba(40,40,50,0.4)"></div>
<div style="position:absolute;left:1106.5px;top:1693.0px;width:8px;height:3px;background:#d8d8d8;"></div>
<div style="position:absolute;right:255px;top:1679.5px;font-size:25px;line-height:25px;color:#dcdcdc;letter-spacing:0.5px;white-space:nowrap;-webkit-text-stroke:0.25px #dcdcdc">222<span style="margin:0 3px">|</span>1<span style="margin:0 3px">|</span>000</div>
<div style="position:absolute;left:591px;top:1710.5px;width:53.5px;height:33px;background:#5a5a5a;"></div>
<div style="position:absolute;left:647.5px;top:1710.5px;width:386.5px;height:33px;background:#5a5a5a;"></div>
<div style="position:absolute;left:1037.5px;top:1710.5px;width:42.5px;height:33px;background:#5a5a5a;"></div>
<div style="position:absolute;left:1082.5px;top:1710.5px;width:45.5px;height:33px;background:#5a5a5a;"></div>
<div style="position:absolute;left:1130.5px;top:1710.5px;width:158.0px;height:33px;background:#5a5a5a;"></div>
<div style="position:absolute;left:1291.5px;top:1710.5px;width:165.0px;height:33px;background:#5a5a5a;"></div>
<svg style="position:absolute;left:608.8px;top:1719.0px;overflow:visible;" width="17.5" height="16" viewBox="0 0 17.5 16" preserveAspectRatio="none"><path d="M0 0 L17.5 8.0 L0 16 Z" fill="#8e8e8e"/></svg>
<svg style="position:absolute;left:703px;top:1717.0px;overflow:visible;" width="28" height="24" viewBox="0 0 28 24" preserveAspectRatio="none"><path d="M1.5 3.5 Q1.5 1.5 3.5 1.5 L24.5 1.5 Q26.5 1.5 26.5 3.5 L26.5 13 L23 22.5 L5 22.5 L1.5 13 Z" fill="#e6e000" stroke="#10243a" stroke-width="1.9" stroke-linejoin="round"/><path d="M7.2 22.4 Q7.8 16 12.6 11.6" stroke="#fff" stroke-width="5.4" fill="none"/><path d="M8.6 9.4 L16.3 7.6 L15.8 15.2 Z" fill="#000" stroke="#fff" stroke-width="1.3" stroke-linejoin="miter"/><path d="M7.2 22.4 Q7.8 16 12.9 11.3" stroke="#000" stroke-width="3.2" fill="none"/></svg>
<div style="position:absolute;left:751.5px;top:1713.5px;font-size:25px;line-height:25px;color:#dcdcdc;font-weight:normal;letter-spacing:0.91px;white-space:nowrap;-webkit-text-stroke:0.25px #dcdcdc">Feelin' Alright</div>
<div style="position:absolute;left:1041.5px;top:1712.5px;width:34px;height:29.5px;border-radius:7px;background:#e6e000;box-shadow:0 0 0 1px rgba(40,40,50,0.4)"></div>
<div style="position:absolute;left:1106.5px;top:1729.0px;width:8px;height:3px;background:#d8d8d8;"></div>
<div style="position:absolute;right:255px;top:1715.5px;font-size:25px;line-height:25px;color:#dcdcdc;letter-spacing:0.5px;white-space:nowrap;-webkit-text-stroke:0.25px #dcdcdc">203<span style="margin:0 3px">|</span>1<span style="margin:0 3px">|</span>000</div>
<div style="position:absolute;left:1456.5px;top:1242.5px;width:38px;height:499.5px;box-sizing:border-box;border:2px solid #2f2f2f;background:#4d4d4d"></div>
<svg style="position:absolute;left:1470px;top:1253.5px;overflow:visible;" width="13.5" height="13" viewBox="0 0 13.5 13" preserveAspectRatio="none"><path d="M0 13 L13.5 13 L6.75 0 Z" fill="#353535"/></svg>
<svg style="position:absolute;left:1470px;top:1718.5px;overflow:visible;" width="13.5" height="13" viewBox="0 0 13.5 13" preserveAspectRatio="none"><path d="M0 0 L13.5 0 L6.75 13 Z" fill="#353535"/></svg>
<div style="position:absolute;left:1466px;top:1285px;width:16px;height:360px;border-radius:8px 8px 6px 6px;background:#323232"></div>
<div style="position:absolute;left:564.3px;top:928.3px;width:9px;height:9px;border-radius:50%;background:#333"></div>
<div style="position:absolute;left:1039.5px;top:1760.5px;width:8.5px;height:8.5px;border-radius:50%;background:#333"></div>
<div style="position:absolute;left:240.5px;top:367.7px;font-size:28px;line-height:28px;color:#ffffff;font-weight:bold;letter-spacing:-0.2px;white-space:nowrap;-webkit-text-stroke:0.5px #fff">Chunk Folders</div>
<div style="position:absolute;left:444.6px;top:383.0px;width:222.10000000000002px;height:3px;background:#22a8df;"></div>
<div style="position:absolute;left:240.5px;top:694.4999999999999px;font-size:28px;line-height:28px;color:#ffffff;font-weight:bold;letter-spacing:-0.2px;white-space:nowrap;-webkit-text-stroke:0.5px #fff">Color-coding</div>
<div style="position:absolute;left:421.8px;top:709.0px;width:273.49999999999994px;height:3px;background:#22a8df;"></div>
<div style="position:absolute;left:240.5px;top:801.4px;font-size:28px;line-height:28px;color:#ffffff;font-weight:bold;letter-spacing:-0.2px;white-space:nowrap;-webkit-text-stroke:0.5px #fff">Set Lists</div>
<div style="position:absolute;left:364.5px;top:815.9px;width:330.79999999999995px;height:3px;background:#22a8df;"></div>
<div style="position:absolute;left:240.5px;top:1159.8px;font-size:28px;line-height:28px;color:#ffffff;font-weight:bold;letter-spacing:-0.2px;white-space:nowrap;-webkit-text-stroke:0.5px #fff">Split View</div>
<div style="position:absolute;left:377.8px;top:1174.7px;width:213.7px;height:3px;background:#22a8df;"></div>
<div style="position:absolute;left:240.5px;top:1421.7px;font-size:28px;line-height:28px;color:#ffffff;font-weight:bold;letter-spacing:-0.2px;white-space:nowrap;-webkit-text-stroke:0.5px #fff">Set List aliases</div>
<div style="position:absolute;left:447.5px;top:1436.5px;width:241.5px;height:3px;background:#22a8df;"></div>
</body></html>
